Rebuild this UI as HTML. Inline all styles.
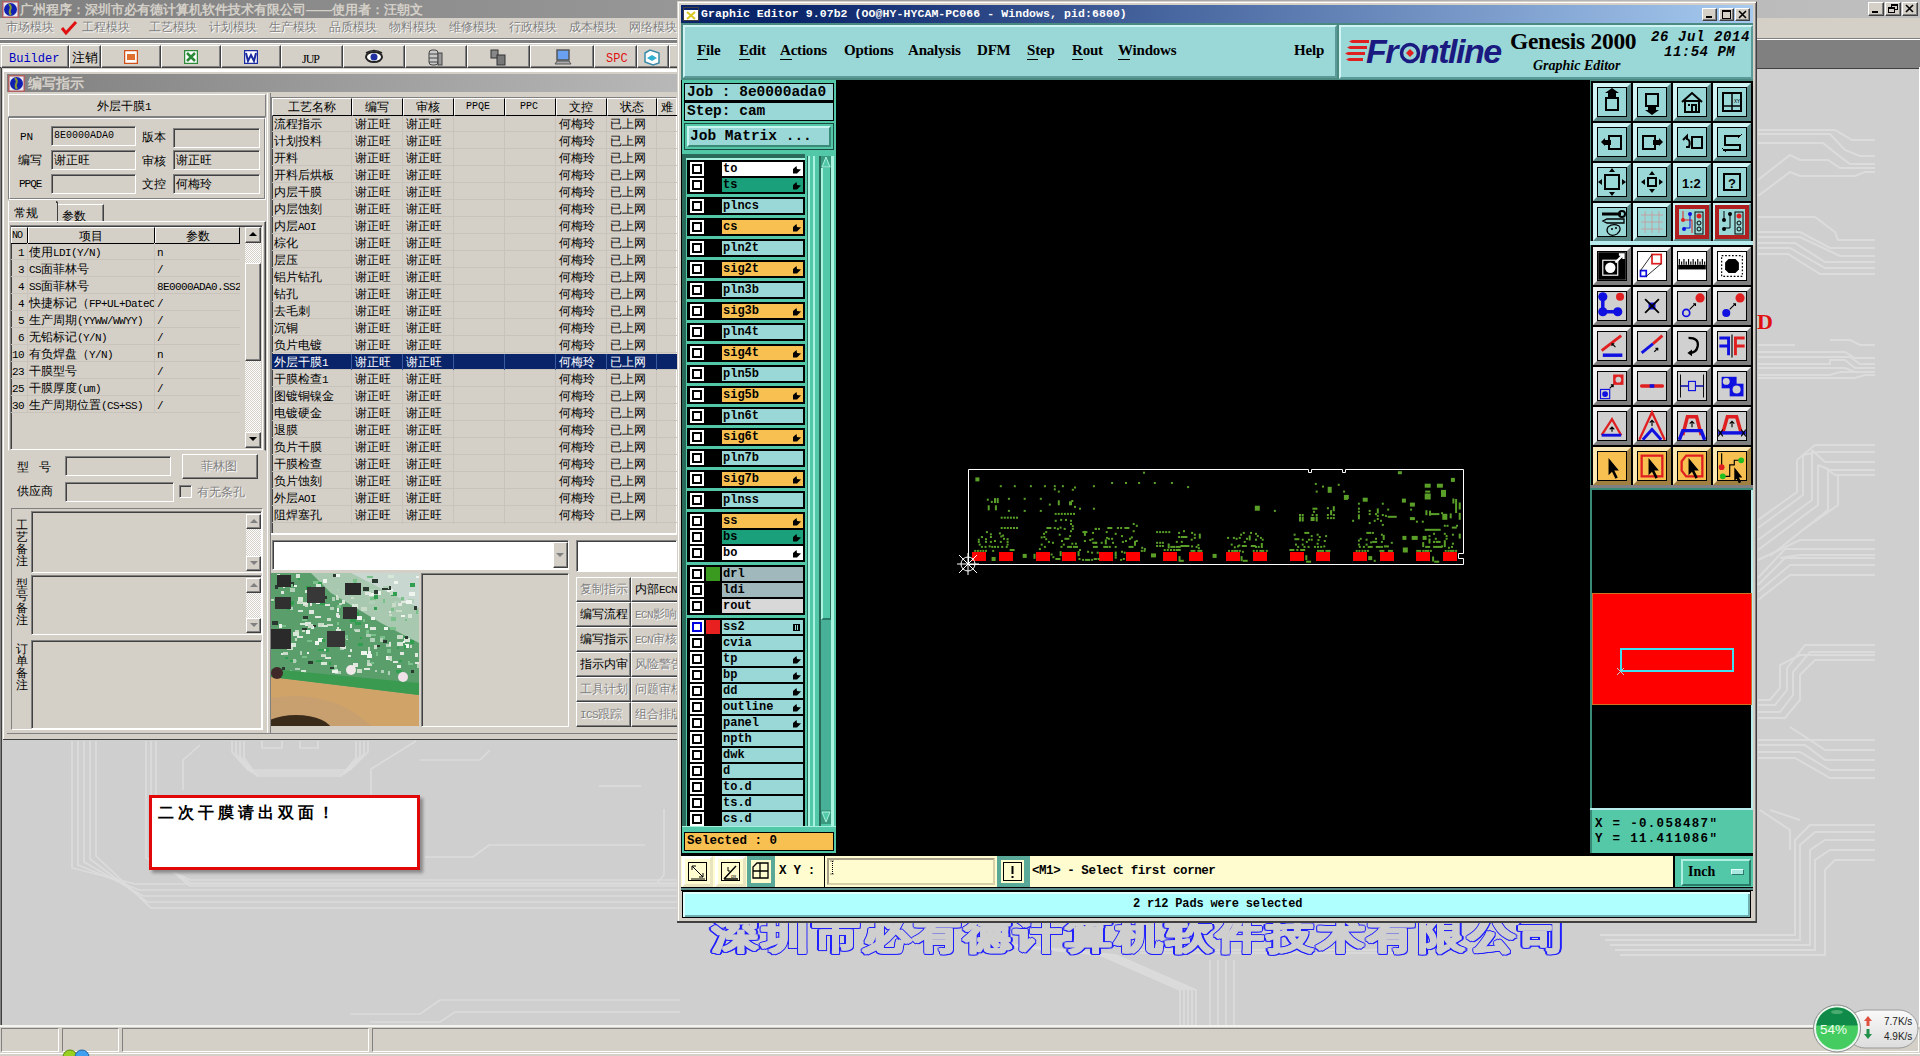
<!DOCTYPE html><html><head><meta charset="utf-8"><style>
*{margin:0;padding:0;box-sizing:border-box}
html{background:#cfcfcf}
html,body{width:1920px;height:1056px;overflow:hidden;font-family:"Liberation Sans",sans-serif;font-size:12px;color:#000}
.a{position:absolute}
.w{background:#d4d0c8}
.rz{border-top:1px solid #fff;border-left:1px solid #fff;border-right:1px solid #404040;border-bottom:1px solid #404040;box-shadow:inset -1px -1px 0 #808080}
.sk{border-top:1px solid #808080;border-left:1px solid #808080;border-right:1px solid #fff;border-bottom:1px solid #fff;box-shadow:inset 1px 1px 0 #404040}
.rb{border:1px solid;border-color:#fff #404040 #404040 #fff;box-shadow:inset -1px -1px 0 #808080}
.sf{border:1px solid;border-color:#808080 #fff #fff #808080;box-shadow:inset 1px 1px 0 #404040}
.et{border:1px solid;border-color:#808080 #fff #fff #808080}
.ee{border:1px solid;border-color:#fff #808080 #808080 #fff}
.dis{color:#808080;text-shadow:1px 1px 0 #fff}
.cn{font-family:"Liberation Sans",sans-serif;font-size:12px;line-height:12px;white-space:nowrap;font-weight:500}
.mono{font-family:"Liberation Mono",monospace}
.m{font-family:"Liberation Mono",monospace;font-size:11px;letter-spacing:-0.6px}
.ser{font-family:"Liberation Serif",serif}
</style></head><body><div class="a " style="left:0px;top:0px;width:1920px;height:18px;background:linear-gradient(90deg,#808080,#c0c0c0)"></div>
<div class="a cn" style="left:20px;top:3px;color:#d4d0c8;font-weight:bold;font-size:13px;line-height:13px">广州程序：深圳市必有德计算机软件技术有限公司——使用者：汪朝文</div>
<div class="a w" style="left:0px;top:18px;width:1920px;height:20px;"></div>
<div class="a cn" style="left:6px;top:21px;color:#808080;font-size:12px;text-shadow:1px 1px 0 #fff">市场模块</div>
<div class="a cn" style="left:82px;top:21px;color:#808080;font-size:12px;text-shadow:1px 1px 0 #fff">工程模块</div>
<div class="a cn" style="left:149px;top:21px;color:#808080;font-size:12px;text-shadow:1px 1px 0 #fff">工艺模块</div>
<div class="a cn" style="left:209px;top:21px;color:#808080;font-size:12px;text-shadow:1px 1px 0 #fff">计划模块</div>
<div class="a cn" style="left:269px;top:21px;color:#808080;font-size:12px;text-shadow:1px 1px 0 #fff">生产模块</div>
<div class="a cn" style="left:329px;top:21px;color:#808080;font-size:12px;text-shadow:1px 1px 0 #fff">品质模块</div>
<div class="a cn" style="left:389px;top:21px;color:#808080;font-size:12px;text-shadow:1px 1px 0 #fff">物料模块</div>
<div class="a cn" style="left:449px;top:21px;color:#808080;font-size:12px;text-shadow:1px 1px 0 #fff">维修模块</div>
<div class="a cn" style="left:509px;top:21px;color:#808080;font-size:12px;text-shadow:1px 1px 0 #fff">行政模块</div>
<div class="a cn" style="left:569px;top:21px;color:#808080;font-size:12px;text-shadow:1px 1px 0 #fff">成本模块</div>
<div class="a cn" style="left:629px;top:21px;color:#808080;font-size:12px;text-shadow:1px 1px 0 #fff">网络模块</div>
<svg class="a" style="left:60px;top:20px" width="18" height="16"><path d="M2 8 L6 13 L16 2" stroke="#e01010" stroke-width="3" fill="none"/></svg>
<div class="a " style="left:0px;top:38px;width:1920px;height:1px;background:#808080"></div>
<div class="a " style="left:0px;top:39px;width:1920px;height:1px;background:#fff"></div>
<div class="a " style="left:0px;top:40px;width:1920px;height:28px;background:#808080"></div>
<div class="a " style="left:0px;top:43px;width:677px;height:1px;background:#fff"></div>
<div class="a w" style="left:0px;top:44px;width:677px;height:24px;"></div>
<div class="a " style="left:0px;top:67px;width:677px;height:1px;background:#404040"></div>
<div class="a w" style="left:0px;top:68px;width:677px;height:672px;"></div>
<div class="a " style="left:0px;top:68px;width:1px;height:957px;background:#808080"></div>
<div class="a " style="left:1px;top:68px;width:1px;height:957px;background:#404040"></div>
<div class="a " style="left:3px;top:69px;width:674px;height:1px;background:#fff"></div>
<div class="a " style="left:4px;top:70px;width:673px;height:2px;background:#fff"></div>
<div class="a " style="left:7px;top:74px;width:670px;height:18px;background:linear-gradient(90deg,#808080,#b8b8b8)"></div>
<div class="a cn" style="left:28px;top:76px;color:#d4d0c8;font-weight:bold;font-size:14px;line-height:14px">编写指示</div>
<div class="a rb w" style="left:1px;top:45px;width:68px;height:23px;"></div>
<div class="a rb w" style="left:69px;top:45px;width:32px;height:23px;"></div>
<div class="a rb w" style="left:101px;top:45px;width:60px;height:23px;"></div>
<div class="a rb w" style="left:161px;top:45px;width:60px;height:23px;"></div>
<div class="a rb w" style="left:221px;top:45px;width:60px;height:23px;"></div>
<div class="a rb w" style="left:281px;top:45px;width:62px;height:23px;"></div>
<div class="a rb w" style="left:343px;top:45px;width:62px;height:23px;"></div>
<div class="a rb w" style="left:405px;top:45px;width:62px;height:23px;"></div>
<div class="a rb w" style="left:467px;top:45px;width:63px;height:23px;"></div>
<div class="a rb w" style="left:530px;top:45px;width:64px;height:23px;"></div>
<div class="a rb w" style="left:594px;top:45px;width:43px;height:23px;"></div>
<div class="a rb w" style="left:637px;top:45px;width:32px;height:23px;"></div>
<div class="a rb w" style="left:669px;top:45px;width:22px;height:23px;"></div>
<div class="a cn" style="left:9px;top:53px;font-family:Liberation Mono,monospace;font-size:12px;color:#0000c0;line-height:12px">Builder</div>
<div class="a cn" style="left:72px;top:51px;font-size:13px;line-height:13px">注销</div>
<svg class="a" style="left:124px;top:50px" width="14" height="14"><rect x="0.5" y="0.5" width="13" height="13" fill="#fff" stroke="#d0501a" stroke-width="1.5"/><rect x="3" y="4" width="8" height="6" fill="#e07030"/></svg>
<svg class="a" style="left:184px;top:50px" width="14" height="14"><rect x="0.5" y="0.5" width="13" height="13" fill="#fff" stroke="#2a8a3a" stroke-width="1.5"/><path d="M3 3 L11 11 M11 3 L3 11" stroke="#2a8a3a" stroke-width="2.5"/></svg>
<svg class="a" style="left:244px;top:50px" width="14" height="14"><rect x="0.5" y="0.5" width="13" height="13" fill="#fff" stroke="#1a2aa0" stroke-width="1.5"/><path d="M2 3 L4 11 L7 5 L10 11 L12 3" stroke="#1a2aa0" stroke-width="2" fill="none"/></svg>
<div class="a cn" style="left:302px;top:53px;font-family:Liberation Serif,serif;font-size:12px;line-height:12px;letter-spacing:-1px">JUP</div>
<svg class="a" style="left:365px;top:49px" width="18" height="16"><ellipse cx="9" cy="8" rx="8" ry="5" fill="#fff" stroke="#222" stroke-width="2"/><circle cx="9" cy="8" r="3.5" fill="#2030a0"/><path d="M1 4 Q9 -1 17 4" stroke="#222" stroke-width="1.5" fill="none"/></svg>
<svg class="a" style="left:427px;top:49px" width="16" height="17"><rect x="2" y="1" width="9" height="15" rx="3" fill="#c8c8c8" stroke="#444"/><path d="M2 5 H11 M2 9 H11 M2 13 H11" stroke="#444"/><rect x="11" y="4" width="4" height="12" fill="#999" stroke="#444"/></svg>
<svg class="a" style="left:490px;top:49px" width="16" height="17"><rect x="1" y="1" width="7" height="8" fill="#888" stroke="#333"/><rect x="7" y="6" width="8" height="10" fill="#777" stroke="#333"/></svg>
<svg class="a" style="left:554px;top:49px" width="18" height="17"><rect x="3" y="1" width="12" height="10" fill="#6aa0f0" stroke="#555" stroke-width="1.5"/><path d="M1 15 H17 L15 12 H3 Z" fill="#aaa" stroke="#555"/></svg>
<div class="a cn" style="left:606px;top:53px;font-family:Liberation Mono,monospace;font-size:12px;line-height:12px;color:#e01010">SPC</div>
<svg class="a" style="left:644px;top:49px" width="16" height="17"><path d="M1 4 L6 1 L15 4 L15 14 L9 16 L1 13 Z" fill="#fff" stroke="#3a8aa8" stroke-width="1.5"/><path d="M3 9 L8 6 L13 9 L8 12Z" fill="#30b0d0"/></svg>
<div class="a w" style="left:8px;top:94px;width:258px;height:23px;border:1px solid;border-color:#fff #808080 #808080 #fff"></div>
<div class="a cn" style="left:97px;top:100px;">外层干膜<span class=m>1</span></div>
<div class="a w" style="left:8px;top:117px;width:258px;height:83px;border:1px solid;border-color:#808080 #fff #fff #808080"></div>
<div class="a " style="left:9px;top:118px;width:256px;height:81px;border:1px solid;border-color:#fff #808080 #808080 #fff"></div>
<div class="a sf" style="left:51px;top:126px;width:85px;height:20px;background:#d4d0c8"></div>
<div class="a cn" style="left:54px;top:130px;font-family:Liberation Mono,monospace;font-size:10px;line-height:12px">8E0000ADA0</div>
<div class="a sf" style="left:51px;top:150px;width:85px;height:20px;background:#d4d0c8"></div>
<div class="a cn" style="left:54px;top:154px;">谢正旺</div>
<div class="a sf" style="left:51px;top:174px;width:85px;height:20px;background:#d4d0c8"></div>
<div class="a sf" style="left:173px;top:128px;width:87px;height:20px;background:#d4d0c8"></div>
<div class="a sf" style="left:173px;top:150px;width:87px;height:20px;background:#d4d0c8"></div>
<div class="a cn" style="left:176px;top:154px;">谢正旺</div>
<div class="a sf" style="left:173px;top:174px;width:87px;height:20px;background:#d4d0c8"></div>
<div class="a cn" style="left:176px;top:178px;">何梅玲</div>
<div class="a cn" style="left:20px;top:131px;font-family:Liberation Mono,monospace;font-size:11px;line-height:12px">PN</div>
<div class="a cn" style="left:18px;top:154px;">编写</div>
<div class="a cn" style="left:19px;top:178px;font-family:Liberation Mono,monospace;font-size:11px;line-height:12px;letter-spacing:-1px">PPQE</div>
<div class="a cn" style="left:142px;top:131px;">版本</div>
<div class="a cn" style="left:142px;top:155px;">审核</div>
<div class="a cn" style="left:142px;top:178px;">文控</div>
<div class="a " style="left:57px;top:204px;width:47px;height:18px;border:1px solid;border-color:#fff #404040 transparent #fff;box-shadow:inset -1px 0 0 #808080"></div>
<div class="a w" style="left:8px;top:201px;width:50px;height:22px;border:1px solid;border-color:#fff #404040 transparent #fff"></div>
<div class="a cn" style="left:14px;top:207px;">常规</div>
<div class="a cn" style="left:62px;top:210px;">参数</div>
<div class="a " style="left:8px;top:221px;width:258px;height:230px;border:1px solid;border-color:#fff #404040 transparent #fff;box-shadow:inset -1px 0 0 #808080"></div>
<div class="a " style="left:8px;top:201px;width:49px;height:2px;background:#d4d0c8;border-left:1px solid #fff;border-right:1px solid #404040"></div>
<div class="a sf" style="left:10px;top:225px;width:253px;height:225px;"></div>
<div class="a " style="left:11px;top:227px;width:17px;height:17px;border:1px solid;border-color:#fff #000 #000 #fff"></div>
<div class="a " style="left:28px;top:227px;width:127px;height:17px;border:1px solid;border-color:#fff #000 #000 #fff"></div>
<div class="a " style="left:155px;top:227px;width:85px;height:17px;border:1px solid;border-color:#fff #000 #000 #fff"></div>
<div class="a " style="left:11px;top:243px;width:229px;height:1px;background:#000"></div>
<div class="a cn" style="left:12px;top:230px;font-family:Liberation Mono,monospace;font-size:10px;line-height:12px;letter-spacing:-1px">NO</div>
<div class="a cn" style="left:79px;top:230px;">项目</div>
<div class="a cn" style="left:186px;top:230px;">参数</div>
<div class="a " style="left:11px;top:259px;width:229px;height:1px;background:#c8c4bc"></div>
<div class="a cn" style="left:18px;top:247px;font-family:Liberation Mono,monospace;font-size:11px;line-height:12px;letter-spacing:-0.6px">1</div>
<div class="a cn" style="left:29px;top:246px;">使用<span class=m>LDI(Y/N)</span></div>
<div class="a cn" style="left:157px;top:247px;font-family:Liberation Mono,monospace;font-size:11px;letter-spacing:-0.6px;line-height:12px;width:83px;overflow:hidden">n</div>
<div class="a " style="left:11px;top:276px;width:229px;height:1px;background:#c8c4bc"></div>
<div class="a cn" style="left:18px;top:264px;font-family:Liberation Mono,monospace;font-size:11px;line-height:12px;letter-spacing:-0.6px">3</div>
<div class="a cn" style="left:29px;top:263px;"><span class=m>CS</span>面菲林号</div>
<div class="a cn" style="left:157px;top:264px;font-family:Liberation Mono,monospace;font-size:11px;letter-spacing:-0.6px;line-height:12px;width:83px;overflow:hidden">/</div>
<div class="a " style="left:11px;top:293px;width:229px;height:1px;background:#c8c4bc"></div>
<div class="a cn" style="left:18px;top:281px;font-family:Liberation Mono,monospace;font-size:11px;line-height:12px;letter-spacing:-0.6px">4</div>
<div class="a cn" style="left:29px;top:280px;"><span class=m>SS</span>面菲林号</div>
<div class="a cn" style="left:157px;top:281px;font-family:Liberation Mono,monospace;font-size:11px;letter-spacing:-0.6px;line-height:12px;width:83px;overflow:hidden">8E0000ADA0.SS2</div>
<div class="a " style="left:11px;top:310px;width:229px;height:1px;background:#c8c4bc"></div>
<div class="a cn" style="left:18px;top:298px;font-family:Liberation Mono,monospace;font-size:11px;line-height:12px;letter-spacing:-0.6px">4</div>
<div class="a cn" style="left:29px;top:297px;">快捷标记（<span class=m>FP+UL+DateC</span></div>
<div class="a cn" style="left:157px;top:298px;font-family:Liberation Mono,monospace;font-size:11px;letter-spacing:-0.6px;line-height:12px;width:83px;overflow:hidden">/</div>
<div class="a " style="left:11px;top:327px;width:229px;height:1px;background:#c8c4bc"></div>
<div class="a cn" style="left:18px;top:315px;font-family:Liberation Mono,monospace;font-size:11px;line-height:12px;letter-spacing:-0.6px">5</div>
<div class="a cn" style="left:29px;top:314px;">生产周期<span class=m>(YYWW/WWYY)</span></div>
<div class="a cn" style="left:157px;top:315px;font-family:Liberation Mono,monospace;font-size:11px;letter-spacing:-0.6px;line-height:12px;width:83px;overflow:hidden">/</div>
<div class="a " style="left:11px;top:344px;width:229px;height:1px;background:#c8c4bc"></div>
<div class="a cn" style="left:18px;top:332px;font-family:Liberation Mono,monospace;font-size:11px;line-height:12px;letter-spacing:-0.6px">6</div>
<div class="a cn" style="left:29px;top:331px;">无铅标记<span class=m>(Y/N)</span></div>
<div class="a cn" style="left:157px;top:332px;font-family:Liberation Mono,monospace;font-size:11px;letter-spacing:-0.6px;line-height:12px;width:83px;overflow:hidden">/</div>
<div class="a " style="left:11px;top:361px;width:229px;height:1px;background:#c8c4bc"></div>
<div class="a cn" style="left:12px;top:349px;font-family:Liberation Mono,monospace;font-size:11px;line-height:12px;letter-spacing:-0.6px">10</div>
<div class="a cn" style="left:29px;top:348px;">有负焊盘（<span class=m>Y/N)</span></div>
<div class="a cn" style="left:157px;top:349px;font-family:Liberation Mono,monospace;font-size:11px;letter-spacing:-0.6px;line-height:12px;width:83px;overflow:hidden">n</div>
<div class="a " style="left:11px;top:378px;width:229px;height:1px;background:#c8c4bc"></div>
<div class="a cn" style="left:12px;top:366px;font-family:Liberation Mono,monospace;font-size:11px;line-height:12px;letter-spacing:-0.6px">23</div>
<div class="a cn" style="left:29px;top:365px;">干膜型号</div>
<div class="a cn" style="left:157px;top:366px;font-family:Liberation Mono,monospace;font-size:11px;letter-spacing:-0.6px;line-height:12px;width:83px;overflow:hidden">/</div>
<div class="a " style="left:11px;top:395px;width:229px;height:1px;background:#c8c4bc"></div>
<div class="a cn" style="left:12px;top:383px;font-family:Liberation Mono,monospace;font-size:11px;line-height:12px;letter-spacing:-0.6px">25</div>
<div class="a cn" style="left:29px;top:382px;">干膜厚度<span class=m>(um)</span></div>
<div class="a cn" style="left:157px;top:383px;font-family:Liberation Mono,monospace;font-size:11px;letter-spacing:-0.6px;line-height:12px;width:83px;overflow:hidden">/</div>
<div class="a " style="left:11px;top:412px;width:229px;height:1px;background:#c8c4bc"></div>
<div class="a cn" style="left:12px;top:400px;font-family:Liberation Mono,monospace;font-size:11px;line-height:12px;letter-spacing:-0.6px">30</div>
<div class="a cn" style="left:29px;top:399px;">生产周期位置<span class=m>(CS+SS)</span></div>
<div class="a cn" style="left:157px;top:400px;font-family:Liberation Mono,monospace;font-size:11px;letter-spacing:-0.6px;line-height:12px;width:83px;overflow:hidden">/</div>
<div class="a " style="left:27px;top:243px;width:1px;height:170px;background:#c8c4bc"></div>
<div class="a " style="left:154px;top:243px;width:1px;height:170px;background:#c8c4bc"></div>
<div class="a " style="left:245px;top:227px;width:16px;height:221px;background-image:repeating-conic-gradient(#fff 0 25%,#d4d0c8 0 50%);background-size:2px 2px"></div>
<div class="a rb w" style="left:245px;top:227px;width:16px;height:16px;"></div>
<svg class="a" style="left:249px;top:232px" width="8" height="5"><path d="M0 4 L4 0 L8 4Z" fill="#000"/></svg>
<div class="a rb w" style="left:245px;top:263px;width:16px;height:98px;"></div>
<div class="a rb w" style="left:245px;top:432px;width:16px;height:16px;"></div>
<svg class="a" style="left:249px;top:437px" width="8" height="5"><path d="M0 0 L4 4 L8 0Z" fill="#000"/></svg>
<div class="a cn" style="left:17px;top:461px;">型&nbsp;&nbsp;&nbsp;号</div>
<div class="a cn" style="left:17px;top:485px;">供应商</div>
<div class="a sf" style="left:65px;top:456px;width:106px;height:20px;background:#d4d0c8"></div>
<div class="a sf" style="left:65px;top:482px;width:109px;height:20px;background:#d4d0c8"></div>
<div class="a rb w" style="left:182px;top:454px;width:76px;height:25px;"></div>
<div class="a cn dis" style="left:201px;top:460px;">菲林图</div>
<div class="a sf" style="left:179px;top:485px;width:13px;height:13px;"></div>
<div class="a cn dis" style="left:197px;top:486px;">有无条孔</div>
<div class="a " style="left:11px;top:508px;width:252px;height:222px;border:1px solid;border-color:#808080 #fff #fff #808080"></div>
<div class="a sf" style="left:31px;top:511px;width:231px;height:62px;"></div>
<div class="a cn" style="left:16px;top:519px;line-height:12px">工<br>艺<br>备<br>注</div>
<div class="a sf" style="left:31px;top:575px;width:231px;height:60px;"></div>
<div class="a cn" style="left:16px;top:578px;line-height:12px">型<br>号<br>备<br>注</div>
<div class="a sf" style="left:31px;top:640px;width:231px;height:89px;"></div>
<div class="a cn" style="left:16px;top:643px;line-height:12px">订<br>单<br>备<br>注</div>
<div class="a " style="left:246px;top:514px;width:15px;height:57px;background-image:repeating-conic-gradient(#fff 0 25%,#d4d0c8 0 50%);background-size:2px 2px"></div>
<div class="a rb w" style="left:246px;top:514px;width:15px;height:15px;"></div>
<div class="a rb w" style="left:246px;top:556px;width:15px;height:15px;"></div>
<svg class="a" style="left:250px;top:519px" width="8" height="5"><path d="M0 4 L4 0 L8 4Z" fill="#808080"/></svg>
<svg class="a" style="left:250px;top:561px" width="8" height="5"><path d="M0 0 L4 4 L8 0Z" fill="#808080"/></svg>
<div class="a " style="left:246px;top:578px;width:15px;height:55px;background-image:repeating-conic-gradient(#fff 0 25%,#d4d0c8 0 50%);background-size:2px 2px"></div>
<div class="a rb w" style="left:246px;top:578px;width:15px;height:15px;"></div>
<div class="a rb w" style="left:246px;top:618px;width:15px;height:15px;"></div>
<svg class="a" style="left:250px;top:583px" width="8" height="5"><path d="M0 4 L4 0 L8 4Z" fill="#808080"/></svg>
<svg class="a" style="left:250px;top:623px" width="8" height="5"><path d="M0 0 L4 4 L8 0Z" fill="#808080"/></svg>
<div class="a " style="left:267px;top:93px;width:1px;height:640px;background:#fff"></div>
<div class="a " style="left:270px;top:93px;width:1px;height:640px;background:#808080"></div>
<div class="a sf" style="left:271px;top:97px;width:406px;height:437px;"></div>
<div class="a " style="left:272px;top:98px;width:80px;height:18px;border:1px solid;border-color:#fff #000 #000 #fff"></div>
<div class="a cn" style="left:288px;top:101px;">工艺名称</div>
<div class="a " style="left:352px;top:98px;width:51px;height:18px;border:1px solid;border-color:#fff #000 #000 #fff"></div>
<div class="a cn" style="left:365px;top:101px;">编写</div>
<div class="a " style="left:403px;top:98px;width:51px;height:18px;border:1px solid;border-color:#fff #000 #000 #fff"></div>
<div class="a cn" style="left:416px;top:101px;">审核</div>
<div class="a " style="left:454px;top:98px;width:51px;height:18px;border:1px solid;border-color:#fff #000 #000 #fff"></div>
<div class="a cn" style="left:466px;top:101px;font-family:Liberation Mono,monospace;font-size:10px;line-height:12px">PPQE</div>
<div class="a " style="left:505px;top:98px;width:51px;height:18px;border:1px solid;border-color:#fff #000 #000 #fff"></div>
<div class="a cn" style="left:520px;top:101px;font-family:Liberation Mono,monospace;font-size:10px;line-height:12px">PPC</div>
<div class="a " style="left:556px;top:98px;width:51px;height:18px;border:1px solid;border-color:#fff #000 #000 #fff"></div>
<div class="a cn" style="left:569px;top:101px;">文控</div>
<div class="a " style="left:607px;top:98px;width:50px;height:18px;border:1px solid;border-color:#fff #000 #000 #fff"></div>
<div class="a cn" style="left:620px;top:101px;">状态</div>
<div class="a " style="left:657px;top:98px;width:33px;height:18px;border:1px solid;border-color:#fff #000 #000 #fff"></div>
<div class="a cn" style="left:661px;top:101px;">难</div>
<div class="a " style="left:272px;top:131px;width:405px;height:1px;background:#c8c4bc"></div>
<div class="a cn" style="left:274px;top:118px;">流程指示</div>
<div class="a cn" style="left:355px;top:118px;">谢正旺</div>
<div class="a cn" style="left:406px;top:118px;">谢正旺</div>
<div class="a cn" style="left:559px;top:118px;">何梅玲</div>
<div class="a cn" style="left:610px;top:118px;">已上网</div>
<div class="a " style="left:272px;top:148px;width:405px;height:1px;background:#c8c4bc"></div>
<div class="a cn" style="left:274px;top:135px;">计划投料</div>
<div class="a cn" style="left:355px;top:135px;">谢正旺</div>
<div class="a cn" style="left:406px;top:135px;">谢正旺</div>
<div class="a cn" style="left:559px;top:135px;">何梅玲</div>
<div class="a cn" style="left:610px;top:135px;">已上网</div>
<div class="a " style="left:272px;top:165px;width:405px;height:1px;background:#c8c4bc"></div>
<div class="a cn" style="left:274px;top:152px;">开料</div>
<div class="a cn" style="left:355px;top:152px;">谢正旺</div>
<div class="a cn" style="left:406px;top:152px;">谢正旺</div>
<div class="a cn" style="left:559px;top:152px;">何梅玲</div>
<div class="a cn" style="left:610px;top:152px;">已上网</div>
<div class="a " style="left:272px;top:182px;width:405px;height:1px;background:#c8c4bc"></div>
<div class="a cn" style="left:274px;top:169px;">开料后烘板</div>
<div class="a cn" style="left:355px;top:169px;">谢正旺</div>
<div class="a cn" style="left:406px;top:169px;">谢正旺</div>
<div class="a cn" style="left:559px;top:169px;">何梅玲</div>
<div class="a cn" style="left:610px;top:169px;">已上网</div>
<div class="a " style="left:272px;top:199px;width:405px;height:1px;background:#c8c4bc"></div>
<div class="a cn" style="left:274px;top:186px;">内层干膜</div>
<div class="a cn" style="left:355px;top:186px;">谢正旺</div>
<div class="a cn" style="left:406px;top:186px;">谢正旺</div>
<div class="a cn" style="left:559px;top:186px;">何梅玲</div>
<div class="a cn" style="left:610px;top:186px;">已上网</div>
<div class="a " style="left:272px;top:216px;width:405px;height:1px;background:#c8c4bc"></div>
<div class="a cn" style="left:274px;top:203px;">内层蚀刻</div>
<div class="a cn" style="left:355px;top:203px;">谢正旺</div>
<div class="a cn" style="left:406px;top:203px;">谢正旺</div>
<div class="a cn" style="left:559px;top:203px;">何梅玲</div>
<div class="a cn" style="left:610px;top:203px;">已上网</div>
<div class="a " style="left:272px;top:233px;width:405px;height:1px;background:#c8c4bc"></div>
<div class="a cn" style="left:274px;top:220px;">内层<span class=m>AOI</span></div>
<div class="a cn" style="left:355px;top:220px;">谢正旺</div>
<div class="a cn" style="left:406px;top:220px;">谢正旺</div>
<div class="a cn" style="left:559px;top:220px;">何梅玲</div>
<div class="a cn" style="left:610px;top:220px;">已上网</div>
<div class="a " style="left:272px;top:250px;width:405px;height:1px;background:#c8c4bc"></div>
<div class="a cn" style="left:274px;top:237px;">棕化</div>
<div class="a cn" style="left:355px;top:237px;">谢正旺</div>
<div class="a cn" style="left:406px;top:237px;">谢正旺</div>
<div class="a cn" style="left:559px;top:237px;">何梅玲</div>
<div class="a cn" style="left:610px;top:237px;">已上网</div>
<div class="a " style="left:272px;top:267px;width:405px;height:1px;background:#c8c4bc"></div>
<div class="a cn" style="left:274px;top:254px;">层压</div>
<div class="a cn" style="left:355px;top:254px;">谢正旺</div>
<div class="a cn" style="left:406px;top:254px;">谢正旺</div>
<div class="a cn" style="left:559px;top:254px;">何梅玲</div>
<div class="a cn" style="left:610px;top:254px;">已上网</div>
<div class="a " style="left:272px;top:284px;width:405px;height:1px;background:#c8c4bc"></div>
<div class="a cn" style="left:274px;top:271px;">铝片钻孔</div>
<div class="a cn" style="left:355px;top:271px;">谢正旺</div>
<div class="a cn" style="left:406px;top:271px;">谢正旺</div>
<div class="a cn" style="left:559px;top:271px;">何梅玲</div>
<div class="a cn" style="left:610px;top:271px;">已上网</div>
<div class="a " style="left:272px;top:301px;width:405px;height:1px;background:#c8c4bc"></div>
<div class="a cn" style="left:274px;top:288px;">钻孔</div>
<div class="a cn" style="left:355px;top:288px;">谢正旺</div>
<div class="a cn" style="left:406px;top:288px;">谢正旺</div>
<div class="a cn" style="left:559px;top:288px;">何梅玲</div>
<div class="a cn" style="left:610px;top:288px;">已上网</div>
<div class="a " style="left:272px;top:318px;width:405px;height:1px;background:#c8c4bc"></div>
<div class="a cn" style="left:274px;top:305px;">去毛刺</div>
<div class="a cn" style="left:355px;top:305px;">谢正旺</div>
<div class="a cn" style="left:406px;top:305px;">谢正旺</div>
<div class="a cn" style="left:559px;top:305px;">何梅玲</div>
<div class="a cn" style="left:610px;top:305px;">已上网</div>
<div class="a " style="left:272px;top:335px;width:405px;height:1px;background:#c8c4bc"></div>
<div class="a cn" style="left:274px;top:322px;">沉铜</div>
<div class="a cn" style="left:355px;top:322px;">谢正旺</div>
<div class="a cn" style="left:406px;top:322px;">谢正旺</div>
<div class="a cn" style="left:559px;top:322px;">何梅玲</div>
<div class="a cn" style="left:610px;top:322px;">已上网</div>
<div class="a " style="left:272px;top:352px;width:405px;height:1px;background:#c8c4bc"></div>
<div class="a cn" style="left:274px;top:339px;">负片电镀</div>
<div class="a cn" style="left:355px;top:339px;">谢正旺</div>
<div class="a cn" style="left:406px;top:339px;">谢正旺</div>
<div class="a cn" style="left:559px;top:339px;">何梅玲</div>
<div class="a cn" style="left:610px;top:339px;">已上网</div>
<div class="a " style="left:272px;top:354px;width:405px;height:16px;background:#0a246a"></div>
<div class="a " style="left:272px;top:369px;width:405px;height:1px;background:#c8c4bc"></div>
<div class="a cn" style="left:274px;top:356px;color:#fff;">外层干膜<span class=m>1</span></div>
<div class="a cn" style="left:355px;top:356px;color:#fff;">谢正旺</div>
<div class="a cn" style="left:406px;top:356px;color:#fff;">谢正旺</div>
<div class="a cn" style="left:559px;top:356px;color:#fff;">何梅玲</div>
<div class="a cn" style="left:610px;top:356px;color:#fff;">已上网</div>
<div class="a " style="left:272px;top:386px;width:405px;height:1px;background:#c8c4bc"></div>
<div class="a cn" style="left:274px;top:373px;">干膜检查<span class=m>1</span></div>
<div class="a cn" style="left:355px;top:373px;">谢正旺</div>
<div class="a cn" style="left:406px;top:373px;">谢正旺</div>
<div class="a cn" style="left:559px;top:373px;">何梅玲</div>
<div class="a cn" style="left:610px;top:373px;">已上网</div>
<div class="a " style="left:272px;top:403px;width:405px;height:1px;background:#c8c4bc"></div>
<div class="a cn" style="left:274px;top:390px;">图镀铜镍金</div>
<div class="a cn" style="left:355px;top:390px;">谢正旺</div>
<div class="a cn" style="left:406px;top:390px;">谢正旺</div>
<div class="a cn" style="left:559px;top:390px;">何梅玲</div>
<div class="a cn" style="left:610px;top:390px;">已上网</div>
<div class="a " style="left:272px;top:420px;width:405px;height:1px;background:#c8c4bc"></div>
<div class="a cn" style="left:274px;top:407px;">电镀硬金</div>
<div class="a cn" style="left:355px;top:407px;">谢正旺</div>
<div class="a cn" style="left:406px;top:407px;">谢正旺</div>
<div class="a cn" style="left:559px;top:407px;">何梅玲</div>
<div class="a cn" style="left:610px;top:407px;">已上网</div>
<div class="a " style="left:272px;top:437px;width:405px;height:1px;background:#c8c4bc"></div>
<div class="a cn" style="left:274px;top:424px;">退膜</div>
<div class="a cn" style="left:355px;top:424px;">谢正旺</div>
<div class="a cn" style="left:406px;top:424px;">谢正旺</div>
<div class="a cn" style="left:559px;top:424px;">何梅玲</div>
<div class="a cn" style="left:610px;top:424px;">已上网</div>
<div class="a " style="left:272px;top:454px;width:405px;height:1px;background:#c8c4bc"></div>
<div class="a cn" style="left:274px;top:441px;">负片干膜</div>
<div class="a cn" style="left:355px;top:441px;">谢正旺</div>
<div class="a cn" style="left:406px;top:441px;">谢正旺</div>
<div class="a cn" style="left:559px;top:441px;">何梅玲</div>
<div class="a cn" style="left:610px;top:441px;">已上网</div>
<div class="a " style="left:272px;top:471px;width:405px;height:1px;background:#c8c4bc"></div>
<div class="a cn" style="left:274px;top:458px;">干膜检查</div>
<div class="a cn" style="left:355px;top:458px;">谢正旺</div>
<div class="a cn" style="left:406px;top:458px;">谢正旺</div>
<div class="a cn" style="left:559px;top:458px;">何梅玲</div>
<div class="a cn" style="left:610px;top:458px;">已上网</div>
<div class="a " style="left:272px;top:488px;width:405px;height:1px;background:#c8c4bc"></div>
<div class="a cn" style="left:274px;top:475px;">负片蚀刻</div>
<div class="a cn" style="left:355px;top:475px;">谢正旺</div>
<div class="a cn" style="left:406px;top:475px;">谢正旺</div>
<div class="a cn" style="left:559px;top:475px;">何梅玲</div>
<div class="a cn" style="left:610px;top:475px;">已上网</div>
<div class="a " style="left:272px;top:505px;width:405px;height:1px;background:#c8c4bc"></div>
<div class="a cn" style="left:274px;top:492px;">外层<span class=m>AOI</span></div>
<div class="a cn" style="left:355px;top:492px;">谢正旺</div>
<div class="a cn" style="left:406px;top:492px;">谢正旺</div>
<div class="a cn" style="left:559px;top:492px;">何梅玲</div>
<div class="a cn" style="left:610px;top:492px;">已上网</div>
<div class="a " style="left:272px;top:522px;width:405px;height:1px;background:#c8c4bc"></div>
<div class="a cn" style="left:274px;top:509px;">阻焊塞孔</div>
<div class="a cn" style="left:355px;top:509px;">谢正旺</div>
<div class="a cn" style="left:406px;top:509px;">谢正旺</div>
<div class="a cn" style="left:559px;top:509px;">何梅玲</div>
<div class="a cn" style="left:610px;top:509px;">已上网</div>
<div class="a " style="left:351px;top:116px;width:1px;height:408px;background:#c8c4bc"></div>
<div class="a " style="left:402px;top:116px;width:1px;height:408px;background:#c8c4bc"></div>
<div class="a " style="left:453px;top:116px;width:1px;height:408px;background:#c8c4bc"></div>
<div class="a " style="left:504px;top:116px;width:1px;height:408px;background:#c8c4bc"></div>
<div class="a " style="left:555px;top:116px;width:1px;height:408px;background:#c8c4bc"></div>
<div class="a " style="left:606px;top:116px;width:1px;height:408px;background:#c8c4bc"></div>
<div class="a " style="left:656px;top:116px;width:1px;height:408px;background:#c8c4bc"></div>
<div class="a " style="left:351px;top:354px;width:1px;height:16px;background:#3a5aa0"></div>
<div class="a " style="left:402px;top:354px;width:1px;height:16px;background:#3a5aa0"></div>
<div class="a " style="left:453px;top:354px;width:1px;height:16px;background:#3a5aa0"></div>
<div class="a " style="left:504px;top:354px;width:1px;height:16px;background:#3a5aa0"></div>
<div class="a " style="left:555px;top:354px;width:1px;height:16px;background:#3a5aa0"></div>
<div class="a " style="left:606px;top:354px;width:1px;height:16px;background:#3a5aa0"></div>
<div class="a " style="left:656px;top:354px;width:1px;height:16px;background:#3a5aa0"></div>
<div class="a " style="left:271px;top:533px;width:406px;height:2px;background:#fff"></div>
<div class="a sf" style="left:272px;top:540px;width:297px;height:30px;background:#fff"></div>
<div class="a rb w" style="left:553px;top:542px;width:15px;height:26px;"></div>
<svg class="a" style="left:556px;top:553px" width="8" height="5"><path d="M0 0 L4 4 L8 0Z" fill="#808080"/></svg>
<div class="a sf" style="left:576px;top:540px;width:101px;height:32px;background:#fff"></div>
<div class="a" style="left:271px;top:573px;width:148px;height:153px;overflow:hidden"><svg style="filter:blur(0.7px)" width="148" height="153">
<rect width="148" height="153" fill="#5a9e6c"/>
<path d="M40 0 H148 V70 L110 50 L60 20Z" fill="#a8c8b0"/>
<path d="M80 0 H148 V35 L115 18Z" fill="#c8d8d0"/>
<rect x="115" y="71" width="5" height="3" fill="#b0d0b8"/><rect x="47" y="65" width="5" height="4" fill="#eef4ee"/><rect x="24" y="57" width="4" height="2" fill="#c8dcc8"/><rect x="137" y="88" width="2" height="4" fill="#7ac08a"/><rect x="115" y="83" width="6" height="4" fill="#eef4ee"/><rect x="3" y="67" width="2" height="2" fill="#d8e8d8"/><rect x="48" y="30" width="6" height="2" fill="#30a050"/><rect x="83" y="56" width="6" height="2" fill="#b0d0b8"/><rect x="75" y="63" width="2" height="4" fill="#c8dcc8"/><rect x="117" y="83" width="4" height="3" fill="#c8dcc8"/><rect x="65" y="40" width="3" height="4" fill="#e0e8e0"/><rect x="7" y="8" width="6" height="2" fill="#7ac08a"/><rect x="27" y="37" width="5" height="2" fill="#d8e8d8"/><rect x="0" y="27" width="3" height="2" fill="#30a050"/><rect x="96" y="90" width="5" height="3" fill="#c8dcc8"/><rect x="144" y="80" width="3" height="4" fill="#e0e8e0"/><rect x="86" y="11" width="4" height="3" fill="#d8e8d8"/><rect x="104" y="97" width="2" height="2" fill="#b0d0b8"/><rect x="25" y="1" width="2" height="3" fill="#30a050"/><rect x="45" y="87" width="6" height="2" fill="#30a050"/><rect x="130" y="24" width="3" height="3" fill="#7ac08a"/><rect x="29" y="50" width="5" height="2" fill="#d8e8d8"/><rect x="69" y="75" width="4" height="2" fill="#b0d0b8"/><rect x="47" y="50" width="6" height="4" fill="#c8dcc8"/><rect x="10" y="18" width="3" height="3" fill="#e0e8e0"/><rect x="2" y="98" width="6" height="3" fill="#e0e8e0"/><rect x="98" y="9" width="2" height="2" fill="#b0d0b8"/><rect x="62" y="1" width="6" height="3" fill="#2a3a30"/><rect x="116" y="16" width="6" height="3" fill="#eef4ee"/><rect x="98" y="23" width="3" height="3" fill="#b0d0b8"/><rect x="63" y="92" width="3" height="2" fill="#b0d0b8"/><rect x="99" y="61" width="6" height="2" fill="#7ac08a"/><rect x="12" y="13" width="2" height="2" fill="#e0e8e0"/><rect x="61" y="94" width="5" height="3" fill="#7ac08a"/><rect x="125" y="37" width="6" height="2" fill="#c8dcc8"/><rect x="32" y="29" width="5" height="4" fill="#c8dcc8"/><rect x="71" y="27" width="3" height="4" fill="#d8e8d8"/><rect x="17" y="34" width="5" height="3" fill="#b0d0b8"/><rect x="15" y="5" width="3" height="3" fill="#2a3a30"/><rect x="135" y="73" width="3" height="2" fill="#2a3a30"/><rect x="35" y="57" width="4" height="4" fill="#eef4ee"/><rect x="8" y="2" width="5" height="3" fill="#e0e8e0"/><rect x="8" y="2" width="6" height="4" fill="#c8dcc8"/><rect x="123" y="8" width="4" height="3" fill="#eef4ee"/><rect x="18" y="9" width="5" height="4" fill="#2a3a30"/><rect x="11" y="94" width="3" height="3" fill="#2a3a30"/><rect x="21" y="87" width="5" height="2" fill="#7ac08a"/><rect x="7" y="63" width="6" height="2" fill="#7ac08a"/><rect x="97" y="74" width="2" height="4" fill="#c8dcc8"/><rect x="20" y="11" width="2" height="3" fill="#7ac08a"/><rect x="84" y="49" width="6" height="3" fill="#30a050"/><rect x="118" y="69" width="2" height="4" fill="#d8e8d8"/><rect x="79" y="76" width="2" height="3" fill="#d8e8d8"/><rect x="58" y="89" width="2" height="3" fill="#30a050"/><rect x="65" y="1" width="4" height="3" fill="#eef4ee"/><rect x="51" y="66" width="3" height="3" fill="#30a050"/><rect x="127" y="30" width="4" height="3" fill="#e0e8e0"/><rect x="50" y="81" width="5" height="2" fill="#b0d0b8"/><rect x="98" y="28" width="6" height="3" fill="#b0d0b8"/><rect x="34" y="17" width="5" height="3" fill="#d8e8d8"/><rect x="16" y="35" width="3" height="2" fill="#30a050"/><rect x="120" y="35" width="3" height="3" fill="#7ac08a"/><rect x="133" y="63" width="4" height="4" fill="#30a050"/><rect x="82" y="9" width="2" height="3" fill="#d8e8d8"/><rect x="71" y="73" width="4" height="3" fill="#d8e8d8"/><rect x="34" y="51" width="5" height="2" fill="#d8e8d8"/><rect x="68" y="30" width="3" height="2" fill="#c8dcc8"/><rect x="114" y="13" width="6" height="4" fill="#2a3a30"/><rect x="19" y="87" width="3" height="2" fill="#30a050"/><rect x="65" y="22" width="2" height="3" fill="#d8e8d8"/><rect x="45" y="28" width="4" height="3" fill="#eef4ee"/><rect x="100" y="89" width="3" height="2" fill="#7ac08a"/><rect x="99" y="16" width="5" height="3" fill="#b0d0b8"/><rect x="1" y="48" width="6" height="4" fill="#2a3a30"/><rect x="118" y="41" width="3" height="2" fill="#c8dcc8"/><rect x="54" y="31" width="5" height="2" fill="#e0e8e0"/><rect x="137" y="41" width="4" height="4" fill="#d8e8d8"/><rect x="89" y="64" width="2" height="2" fill="#30a050"/><rect x="87" y="70" width="5" height="3" fill="#30a050"/><rect x="7" y="27" width="2" height="3" fill="#d8e8d8"/><rect x="44" y="68" width="4" height="4" fill="#eef4ee"/><rect x="120" y="19" width="6" height="4" fill="#30a050"/><rect x="126" y="74" width="2" height="2" fill="#30a050"/><rect x="134" y="71" width="4" height="4" fill="#eef4ee"/><rect x="133" y="65" width="6" height="3" fill="#e0e8e0"/><rect x="97" y="78" width="3" height="3" fill="#eef4ee"/><rect x="139" y="67" width="4" height="4" fill="#30a050"/><rect x="51" y="52" width="6" height="2" fill="#d8e8d8"/><rect x="96" y="3" width="6" height="2" fill="#7ac08a"/><rect x="139" y="72" width="2" height="3" fill="#c8dcc8"/><rect x="42" y="8" width="6" height="3" fill="#7ac08a"/><rect x="103" y="34" width="3" height="3" fill="#30a050"/><rect x="32" y="43" width="5" height="3" fill="#2a3a30"/><rect x="27" y="24" width="5" height="4" fill="#d8e8d8"/><rect x="66" y="16" width="2" height="2" fill="#b0d0b8"/><rect x="39" y="29" width="2" height="4" fill="#e0e8e0"/><rect x="82" y="92" width="4" height="2" fill="#30a050"/><rect x="26" y="63" width="6" height="2" fill="#e0e8e0"/><rect x="50" y="89" width="6" height="3" fill="#d8e8d8"/><rect x="96" y="81" width="5" height="4" fill="#eef4ee"/><rect x="137" y="26" width="6" height="4" fill="#b0d0b8"/><rect x="135" y="27" width="6" height="4" fill="#eef4ee"/><rect x="59" y="94" width="4" height="2" fill="#2a3a30"/><rect x="80" y="24" width="3" height="2" fill="#c8dcc8"/><rect x="34" y="30" width="3" height="4" fill="#c8dcc8"/><rect x="66" y="49" width="2" height="3" fill="#7ac08a"/><rect x="139" y="90" width="3" height="2" fill="#7ac08a"/><rect x="4" y="12" width="3" height="4" fill="#2a3a30"/><rect x="92" y="14" width="6" height="4" fill="#2a3a30"/><rect x="128" y="87" width="3" height="2" fill="#30a050"/><rect x="27" y="3" width="2" height="4" fill="#30a050"/><rect x="37" y="24" width="3" height="2" fill="#b0d0b8"/><rect x="44" y="20" width="4" height="4" fill="#c8dcc8"/><rect x="148" y="7" width="3" height="4" fill="#30a050"/><rect x="19" y="97" width="2" height="3" fill="#7ac08a"/><rect x="119" y="54" width="6" height="3" fill="#7ac08a"/><rect x="53" y="76" width="4" height="2" fill="#d8e8d8"/><rect x="51" y="23" width="5" height="3" fill="#2a3a30"/><rect x="94" y="51" width="3" height="4" fill="#eef4ee"/><rect x="24" y="65" width="2" height="3" fill="#c8dcc8"/><rect x="103" y="72" width="6" height="2" fill="#2a3a30"/><rect x="66" y="35" width="2" height="4" fill="#eef4ee"/><rect x="103" y="17" width="4" height="4" fill="#2a3a30"/><rect x="110" y="97" width="3" height="3" fill="#b0d0b8"/><rect x="47" y="9" width="4" height="3" fill="#30a050"/><rect x="25" y="1" width="4" height="4" fill="#d8e8d8"/><rect x="59" y="34" width="4" height="3" fill="#b0d0b8"/><rect x="103" y="72" width="3" height="4" fill="#c8dcc8"/><rect x="99" y="65" width="5" height="4" fill="#b0d0b8"/><rect x="30" y="97" width="5" height="4" fill="#d8e8d8"/><rect x="29" y="78" width="2" height="4" fill="#b0d0b8"/><rect x="65" y="56" width="5" height="4" fill="#d8e8d8"/><rect x="50" y="82" width="5" height="2" fill="#c8dcc8"/><rect x="66" y="32" width="4" height="3" fill="#7ac08a"/><rect x="133" y="72" width="2" height="4" fill="#30a050"/><rect x="19" y="70" width="6" height="4" fill="#d8e8d8"/><rect x="98" y="20" width="5" height="3" fill="#eef4ee"/><rect x="126" y="69" width="6" height="4" fill="#d8e8d8"/><rect x="109" y="63" width="5" height="3" fill="#7ac08a"/><rect x="79" y="46" width="6" height="3" fill="#30a050"/><rect x="69" y="71" width="4" height="4" fill="#e0e8e0"/><rect x="6" y="1" width="3" height="4" fill="#d8e8d8"/><rect x="40" y="52" width="5" height="2" fill="#2a3a30"/><rect x="101" y="6" width="6" height="4" fill="#2a3a30"/><rect x="18" y="28" width="5" height="4" fill="#30a050"/><rect x="64" y="96" width="3" height="2" fill="#c8dcc8"/><rect x="119" y="18" width="3" height="4" fill="#c8dcc8"/><rect x="12" y="79" width="5" height="3" fill="#c8dcc8"/><rect x="52" y="6" width="4" height="4" fill="#eef4ee"/><rect x="31" y="46" width="5" height="2" fill="#7ac08a"/><rect x="116" y="76" width="4" height="4" fill="#7ac08a"/><rect x="93" y="95" width="6" height="2" fill="#e0e8e0"/><rect x="32" y="30" width="5" height="2" fill="#e0e8e0"/><rect x="129" y="79" width="4" height="3" fill="#e0e8e0"/><rect x="144" y="89" width="6" height="2" fill="#e0e8e0"/><rect x="61" y="24" width="3" height="4" fill="#b0d0b8"/><rect x="10" y="80" width="2" height="2" fill="#e0e8e0"/><rect x="66" y="54" width="2" height="4" fill="#d8e8d8"/><rect x="26" y="28" width="6" height="3" fill="#c8dcc8"/><rect x="22" y="86" width="3" height="4" fill="#b0d0b8"/><rect x="95" y="61" width="5" height="3" fill="#b0d0b8"/><rect x="86" y="43" width="5" height="4" fill="#eef4ee"/><rect x="19" y="15" width="5" height="4" fill="#b0d0b8"/><rect x="113" y="54" width="4" height="3" fill="#eef4ee"/><rect x="94" y="19" width="6" height="3" fill="#e0e8e0"/><rect x="140" y="97" width="3" height="3" fill="#2a3a30"/><rect x="148" y="12" width="5" height="3" fill="#c8dcc8"/><rect x="139" y="10" width="5" height="4" fill="#30a050"/><rect x="118" y="38" width="2" height="2" fill="#e0e8e0"/><rect x="54" y="84" width="6" height="2" fill="#e0e8e0"/><rect x="126" y="92" width="4" height="3" fill="#eef4ee"/><rect x="56" y="45" width="4" height="3" fill="#c8dcc8"/><rect x="82" y="90" width="5" height="4" fill="#e0e8e0"/><rect x="112" y="67" width="4" height="3" fill="#2a3a30"/><rect x="56" y="51" width="6" height="2" fill="#c8dcc8"/><rect x="92" y="46" width="2" height="3" fill="#7ac08a"/><rect x="99" y="24" width="6" height="3" fill="#7ac08a"/><rect x="138" y="19" width="6" height="4" fill="#eef4ee"/><rect x="45" y="11" width="5" height="3" fill="#d8e8d8"/><rect x="56" y="66" width="2" height="4" fill="#eef4ee"/><rect x="145" y="37" width="2" height="4" fill="#7ac08a"/><rect x="16" y="74" width="6" height="3" fill="#c8dcc8"/><rect x="85" y="10" width="4" height="4" fill="#c8dcc8"/><rect x="80" y="10" width="2" height="4" fill="#eef4ee"/><rect x="24" y="95" width="5" height="2" fill="#b0d0b8"/><rect x="125" y="97" width="6" height="3" fill="#30a050"/><rect x="100" y="44" width="4" height="3" fill="#eef4ee"/><rect x="126" y="62" width="6" height="4" fill="#c8dcc8"/><rect x="11" y="52" width="4" height="2" fill="#7ac08a"/><rect x="22" y="59" width="6" height="4" fill="#d8e8d8"/><rect x="134" y="46" width="2" height="2" fill="#7ac08a"/><rect x="107" y="18" width="3" height="4" fill="#eef4ee"/><rect x="96" y="87" width="3" height="3" fill="#b0d0b8"/><rect x="99" y="54" width="6" height="3" fill="#e0e8e0"/><rect x="15" y="60" width="4" height="4" fill="#c8dcc8"/><rect x="77" y="82" width="3" height="2" fill="#d8e8d8"/><rect x="117" y="2" width="6" height="3" fill="#d8e8d8"/><rect x="80" y="13" width="3" height="2" fill="#2a3a30"/><rect x="55" y="75" width="3" height="4" fill="#30a050"/><rect x="130" y="28" width="5" height="2" fill="#e0e8e0"/><rect x="103" y="22" width="4" height="4" fill="#30a050"/><rect x="66" y="62" width="5" height="3" fill="#c8dcc8"/><rect x="123" y="28" width="5" height="2" fill="#b0d0b8"/><rect x="34" y="49" width="6" height="4" fill="#e0e8e0"/><rect x="14" y="84" width="3" height="2" fill="#30a050"/><rect x="95" y="57" width="3" height="4" fill="#7ac08a"/><rect x="40" y="53" width="3" height="3" fill="#eef4ee"/><rect x="66" y="66" width="3" height="4" fill="#e0e8e0"/><rect x="132" y="68" width="2" height="2" fill="#eef4ee"/><rect x="0" y="26" width="3" height="2" fill="#c8dcc8"/><rect x="90" y="34" width="6" height="4" fill="#c8dcc8"/><rect x="122" y="88" width="5" height="2" fill="#e0e8e0"/><rect x="4" y="24" width="5" height="2" fill="#c8dcc8"/><rect x="112" y="26" width="2" height="4" fill="#7ac08a"/><rect x="134" y="63" width="3" height="3" fill="#2a3a30"/><rect x="79" y="51" width="2" height="4" fill="#e0e8e0"/><rect x="119" y="85" width="2" height="3" fill="#c8dcc8"/><rect x="35" y="13" width="5" height="4" fill="#30a050"/><rect x="31" y="83" width="5" height="2" fill="#7ac08a"/><rect x="121" y="30" width="4" height="4" fill="#c8dcc8"/><rect x="117" y="98" width="2" height="4" fill="#b0d0b8"/><rect x="38" y="37" width="5" height="4" fill="#e0e8e0"/><rect x="86" y="96" width="5" height="4" fill="#c8dcc8"/><rect x="65" y="24" width="3" height="3" fill="#c8dcc8"/><rect x="84" y="39" width="4" height="4" fill="#30a050"/><rect x="84" y="57" width="5" height="2" fill="#c8dcc8"/><rect x="36" y="79" width="2" height="2" fill="#eef4ee"/><rect x="46" y="24" width="5" height="2" fill="#30a050"/><rect x="23" y="12" width="3" height="2" fill="#eef4ee"/><rect x="31" y="55" width="5" height="2" fill="#2a3a30"/><rect x="109" y="65" width="3" height="4" fill="#b0d0b8"/><rect x="37" y="88" width="5" height="3" fill="#2a3a30"/><rect x="105" y="79" width="2" height="4" fill="#7ac08a"/><rect x="81" y="31" width="6" height="4" fill="#d8e8d8"/><rect x="66" y="42" width="3" height="3" fill="#e0e8e0"/><rect x="112" y="13" width="6" height="3" fill="#b0d0b8"/><rect x="130" y="42" width="4" height="2" fill="#eef4ee"/><rect x="64" y="98" width="6" height="3" fill="#b0d0b8"/><rect x="90" y="78" width="6" height="4" fill="#eef4ee"/><rect x="146" y="91" width="3" height="4" fill="#b0d0b8"/><rect x="145" y="3" width="3" height="2" fill="#eef4ee"/><rect x="62" y="61" width="6" height="3" fill="#2a3a30"/><rect x="84" y="11" width="4" height="3" fill="#30a050"/><rect x="31" y="57" width="3" height="2" fill="#c8dcc8"/><rect x="143" y="33" width="3" height="4" fill="#2a3a30"/><rect x="37" y="15" width="2" height="3" fill="#2a3a30"/><rect x="61" y="97" width="6" height="3" fill="#eef4ee"/><rect x="47" y="76" width="6" height="2" fill="#30a050"/><rect x="8" y="51" width="3" height="4" fill="#eef4ee"/><rect x="78" y="96" width="5" height="4" fill="#d8e8d8"/><rect x="40" y="25" width="5" height="3" fill="#d8e8d8"/><rect x="36" y="67" width="5" height="2" fill="#7ac08a"/><rect x="44" y="43" width="6" height="2" fill="#e0e8e0"/><rect x="62" y="72" width="4" height="2" fill="#d8e8d8"/><rect x="37" y="51" width="5" height="4" fill="#c8dcc8"/><rect x="120" y="44" width="5" height="4" fill="#7ac08a"/><rect x="72" y="62" width="5" height="4" fill="#7ac08a"/><rect x="111" y="15" width="6" height="2" fill="#2a3a30"/><rect x="134" y="66" width="5" height="3" fill="#d8e8d8"/><rect x="82" y="6" width="4" height="4" fill="#7ac08a"/>
<rect x="6" y="2" width="14" height="12" fill="#2a2a2a"/><rect x="4" y="24" width="16" height="12" fill="#303030"/>
<rect x="36" y="14" width="18" height="16" fill="#383838"/><rect x="74" y="10" width="16" height="12" fill="#2a2a2a"/>
<rect x="72" y="34" width="14" height="12" fill="#303030"/>
<rect x="56" y="58" width="18" height="16" fill="#353535"/><rect x="0" y="56" width="20" height="20" fill="#2a2a2a"/>
<path d="M0 104 L148 122 L148 153 L0 153Z" fill="#d0a468"/>
<path d="M0 96 L148 110 L148 122 L0 104Z" fill="#3a9a50"/>
<path d="M0 125 Q60 115 100 153 H0Z" fill="#c8a070"/>
<ellipse cx="25" cy="158" rx="36" ry="16" fill="#3a2a1a"/>
<circle cx="6" cy="100" r="6" fill="#402828"/>
<circle cx="80" cy="97" r="5" fill="#f0e8e8"/><circle cx="132" cy="104" r="5" fill="#f0e0e8"/>
</svg></div>
<div class="a " style="left:421px;top:573px;width:148px;height:154px;border:1px solid;border-color:#808080 #fff #fff #808080;box-shadow:inset 1px 1px 0 #404040"></div>
<div class="a rb w" style="left:576px;top:577px;width:55px;height:25px;"></div>
<div class="a cn dis" style="left:580px;top:583px;font-size:12px;width:48px;overflow:hidden">复制指示</div>
<div class="a rb w" style="left:631px;top:577px;width:55px;height:25px;"></div>
<div class="a cn" style="left:635px;top:583px;font-size:12px;width:48px;overflow:hidden">内部<span class=m>ECN</span></div>
<div class="a rb w" style="left:576px;top:602px;width:55px;height:25px;"></div>
<div class="a cn" style="left:580px;top:608px;font-size:12px;width:48px;overflow:hidden">编写流程</div>
<div class="a rb w" style="left:631px;top:602px;width:55px;height:25px;"></div>
<div class="a cn dis" style="left:635px;top:608px;font-size:12px;width:48px;overflow:hidden"><span class=m>ECN</span>影响</div>
<div class="a rb w" style="left:576px;top:627px;width:55px;height:25px;"></div>
<div class="a cn" style="left:580px;top:633px;font-size:12px;width:48px;overflow:hidden">编写指示</div>
<div class="a rb w" style="left:631px;top:627px;width:55px;height:25px;"></div>
<div class="a cn dis" style="left:635px;top:633px;font-size:12px;width:48px;overflow:hidden"><span class=m>ECN</span>审核</div>
<div class="a rb w" style="left:576px;top:652px;width:55px;height:25px;"></div>
<div class="a cn" style="left:580px;top:658px;font-size:12px;width:48px;overflow:hidden">指示内审</div>
<div class="a rb w" style="left:631px;top:652px;width:55px;height:25px;"></div>
<div class="a cn dis" style="left:635px;top:658px;font-size:12px;width:48px;overflow:hidden">风险警告</div>
<div class="a rb w" style="left:576px;top:677px;width:55px;height:25px;"></div>
<div class="a cn dis" style="left:580px;top:683px;font-size:12px;width:48px;overflow:hidden">工具计划</div>
<div class="a rb w" style="left:631px;top:677px;width:55px;height:25px;"></div>
<div class="a cn dis" style="left:635px;top:683px;font-size:12px;width:48px;overflow:hidden">问题审核</div>
<div class="a rb w" style="left:576px;top:702px;width:55px;height:25px;"></div>
<div class="a cn dis" style="left:580px;top:708px;font-size:12px;width:48px;overflow:hidden"><span class=m>ICS</span>跟踪</div>
<div class="a rb w" style="left:631px;top:702px;width:55px;height:25px;"></div>
<div class="a cn dis" style="left:635px;top:708px;font-size:12px;width:48px;overflow:hidden">组合排版</div>
<div class="a " style="left:7px;top:733px;width:670px;height:1px;background:#808080"></div>
<div class="a " style="left:3px;top:739px;width:674px;height:1px;background:#404040"></div>
<div class="a " style="left:3px;top:69px;width:1px;height:670px;background:#fff"></div>
<div class="a " style="left:677px;top:1px;width:1080px;height:922px;background:#d4d0c8;border-top:1px solid #d4d0c8;border-left:1px solid #d4d0c8;border-right:1px solid #404040;border-bottom:1px solid #404040;box-shadow:inset 1px 1px 0 #fff,inset -1px -1px 0 #808080"></div>
<div class="a " style="left:681px;top:5px;width:1072px;height:18px;background:linear-gradient(90deg,#0a246a 0%,#0a246a 10%,#a6caf0 100%)"></div>
<svg class="a" style="left:683px;top:7px" width="16" height="14"><rect x="0.5" y="0.5" width="15" height="13" fill="#fff" stroke="#404040"/><rect x="1" y="1" width="14" height="2" fill="#0a246a"/><path d="M4 5 L12 12 M12 5 L4 12" stroke="#d8c820" stroke-width="2"/></svg>
<div class="a cn" style="left:701px;top:8px;color:#fff;font-weight:bold;font-size:11.5px;line-height:12px;font-family:Liberation Mono,monospace;letter-spacing:0.08px">Graphic Editor 9.07b2 (OO@HY-HYCAM-PC066 - Windows, pid:6800)</div>
<div class="a rb w" style="left:1702px;top:8px;width:15px;height:13px;"></div>
<div class="a rb w" style="left:1719px;top:8px;width:15px;height:13px;"></div>
<div class="a rb w" style="left:1735px;top:8px;width:15px;height:13px;"></div>
<svg class="a" style="left:1705px;top:10px" width="10" height="10"><rect x="1" y="6" width="6" height="2" fill="#000"/></svg>
<svg class="a" style="left:1722px;top:10px" width="10" height="10"><rect x="0.5" y="0.5" width="8" height="8" fill="none" stroke="#000"/><rect x="0" y="0" width="9" height="2" fill="#000"/></svg>
<svg class="a" style="left:1738px;top:10px" width="10" height="10"><path d="M1 1 L8 8 M8 1 L1 8" stroke="#000" stroke-width="1.6"/></svg>
<div class="a " style="left:681px;top:23px;width:1072px;height:57px;background:#4a8a80"></div>
<div class="a " style="left:683px;top:25px;width:654px;height:53px;background:#9ad8d8;border-top:2px solid #d0f4f4;border-left:2px solid #d0f4f4;border-bottom:2px solid #5a9a98;border-right:2px solid #5a9a98"></div>
<div class="a cn" style="left:697px;top:42px;font-family:Liberation Serif,serif;font-weight:bold;font-size:15px;line-height:16px;letter-spacing:-0.2px">File</div>
<div class="a " style="left:697px;top:59px;width:11px;height:1px;background:#000"></div>
<div class="a cn" style="left:739px;top:42px;font-family:Liberation Serif,serif;font-weight:bold;font-size:15px;line-height:16px;letter-spacing:-0.2px">Edit</div>
<div class="a " style="left:739px;top:59px;width:11px;height:1px;background:#000"></div>
<div class="a cn" style="left:780px;top:42px;font-family:Liberation Serif,serif;font-weight:bold;font-size:15px;line-height:16px;letter-spacing:-0.2px">Actions</div>
<div class="a " style="left:780px;top:59px;width:12px;height:1px;background:#000"></div>
<div class="a cn" style="left:844px;top:42px;font-family:Liberation Serif,serif;font-weight:bold;font-size:15px;line-height:16px;letter-spacing:-0.2px">Options</div>
<div class="a cn" style="left:908px;top:42px;font-family:Liberation Serif,serif;font-weight:bold;font-size:15px;line-height:16px;letter-spacing:-0.2px">Analysis</div>
<div class="a cn" style="left:977px;top:42px;font-family:Liberation Serif,serif;font-weight:bold;font-size:15px;line-height:16px;letter-spacing:-0.2px">DFM</div>
<div class="a cn" style="left:1027px;top:42px;font-family:Liberation Serif,serif;font-weight:bold;font-size:15px;line-height:16px;letter-spacing:-0.2px">Step</div>
<div class="a " style="left:1027px;top:59px;width:11px;height:1px;background:#000"></div>
<div class="a cn" style="left:1072px;top:42px;font-family:Liberation Serif,serif;font-weight:bold;font-size:15px;line-height:16px;letter-spacing:-0.2px">Rout</div>
<div class="a " style="left:1072px;top:59px;width:11px;height:1px;background:#000"></div>
<div class="a cn" style="left:1118px;top:42px;font-family:Liberation Serif,serif;font-weight:bold;font-size:15px;line-height:16px;letter-spacing:-0.2px">Windows</div>
<div class="a " style="left:1118px;top:59px;width:12px;height:1px;background:#000"></div>
<div class="a cn" style="left:1294px;top:42px;font-family:Liberation Serif,serif;font-weight:bold;font-size:15px;line-height:16px;letter-spacing:-0.2px">Help</div>
<div class="a " style="left:1339px;top:25px;width:414px;height:54px;background:#9ad8d8;border-top:2px solid #d0f4f4;border-left:2px solid #d0f4f4;border-bottom:2px solid #5a9a98;border-right:2px solid #5a9a98"></div>
<svg class="a" style="left:1344px;top:38px" width="26" height="26"><g fill="#e02020"><path d="M8 2 H25 V5 H8 L5 3.5Z"/><path d="M6 8 H23 V11 H6 L3 9.5Z"/><path d="M4 14 H21 V17 H4 L1 15.5Z"/><path d="M5 20 H19 V23 H5 L2 21.5Z"/></g></svg>
<div class="a cn" style="left:1366px;top:34px;font-family:Liberation Sans,sans-serif;font-weight:bold;font-style:italic;font-size:34px;line-height:34px;color:#1a1a80;letter-spacing:-1.5px">Fr<span style="display:inline-block;width:22px"></span>ntline</div>
<svg class="a" style="left:1399px;top:42px" width="22" height="22"><circle cx="11" cy="11" r="8.5" fill="none" stroke="#1a1a80" stroke-width="3.5"/><path d="M11 7 L15 11 L11 15 L7 11Z" fill="#e02020"/></svg>
<div class="a cn" style="left:1510px;top:29px;font-family:Liberation Serif,serif;font-weight:bold;font-size:23.5px;line-height:24px;color:#000;letter-spacing:-0.3px">Genesis 2000</div>
<div class="a cn" style="left:1533px;top:58px;font-family:Liberation Serif,serif;font-style:italic;font-weight:bold;font-size:14px;line-height:16px">Graphic Editor</div>
<div class="a cn" style="left:1651px;top:30px;font-family:Liberation Mono,monospace;font-style:italic;font-weight:bold;font-size:14px;line-height:14px;letter-spacing:0.6px">26 Jul 2014</div>
<div class="a cn" style="left:1664px;top:45px;font-family:Liberation Mono,monospace;font-style:italic;font-weight:bold;font-size:14px;line-height:14px;letter-spacing:0.5px">11:54 PM</div>
<div class="a " style="left:681px;top:80px;width:1072px;height:774px;background:#000"></div>
<div class="a " style="left:682px;top:80px;width:154px;height:773px;background:#52c8a8"></div>
<div class="a " style="left:684px;top:83px;width:150px;height:19px;background:#9ad8d8;border:1px solid #000;border-bottom-width:2px"></div>
<div class="a cn" style="left:687px;top:85px;font-family:Liberation Mono,monospace;font-weight:bold;font-size:14.5px;line-height:15px">Job : 8e0000ada0</div>
<div class="a " style="left:684px;top:102px;width:150px;height:19px;background:#9ad8d8;border:1px solid #000"></div>
<div class="a cn" style="left:687px;top:104px;font-family:Liberation Mono,monospace;font-weight:bold;font-size:14.5px;line-height:15px">Step: cam</div>
<div class="a " style="left:684px;top:123px;width:150px;height:27px;background:#52c8a8;border:1px solid #1a4a40"></div>
<div class="a " style="left:687px;top:126px;width:144px;height:21px;background:#9ad8d8;border-top:2px solid #c8f4f0;border-left:2px solid #c8f4f0;border-bottom:2px solid #3a8a78;border-right:2px solid #3a8a78"></div>
<div class="a cn" style="left:690px;top:129px;font-family:Liberation Mono,monospace;font-weight:bold;font-size:14.5px;line-height:15px">Job Matrix ...</div>
<div class="a " style="left:682px;top:154px;width:126px;height:673px;background:#2a6a5a"></div>
<div class="a " style="left:686px;top:158px;width:122px;height:669px;background:#52c8a8;border-top:2px solid #a8f0e0"></div>
<div class="a " style="left:805px;top:154px;width:31px;height:673px;background:#52c8a8"></div>
<div class="a " style="left:807px;top:156px;width:1px;height:671px;background:#2a6a5a"></div>
<div class="a " style="left:808px;top:156px;width:2px;height:671px;background:#a8f4e0"></div>
<div class="a " style="left:813px;top:156px;width:2px;height:671px;background:#a8f4e0"></div>
<div class="a " style="left:819px;top:156px;width:2px;height:671px;background:#2a6a5a"></div>
<div class="a " style="left:831px;top:156px;width:3px;height:671px;background:#a8f4e0"></div>
<div class="a " style="left:821px;top:168px;width:10px;height:452px;background:#52c8a8;border-left:2px solid #a8f4e0;border-right:1px solid #2a6a5a;border-bottom:2px solid #2a7a68"></div>
<div class="a " style="left:821px;top:620px;width:10px;height:190px;background:#48b096"></div>
<div class="a " style="left:821px;top:156px;width:10px;height:12px;background:#3a9a80"></div>
<svg class="a" style="left:821px;top:156px" width="10" height="12"><path d="M5 1 L9 11 L1 11Z" fill="#52c8a8" stroke="#a8f4e0"/></svg>
<div class="a " style="left:821px;top:810px;width:10px;height:14px;background:#3a9a80"></div>
<svg class="a" style="left:821px;top:811px" width="10" height="12"><path d="M1 1 L9 1 L5 11Z" fill="#52c8a8" stroke="#a8f4e0"/></svg>
<div class="a" style="left:682px;top:158px;width:126px;height:668px;overflow:hidden">
<div class="a" style="left:5px;top:2px;width:118px;height:34px;background:#000"></div>
<div class="a" style="left:8px;top:4px;width:14px;height:14px;background:#fff"><div class="a" style="left:2px;top:2px;width:10px;height:10px;border:2px solid #000"></div></div>
<div class="a" style="left:40px;top:4px;width:81px;height:14px;background:#fff"><div class="a" style="left:1px;top:1px;font-family:Liberation Mono,monospace;font-weight:bold;font-size:12px;line-height:12px">to</div><svg width="8" height="8" style="position:absolute;right:2px;top:4px"><path d="M0 3 L3.5 0 L4 3 L8 3.5 L4 7.5 L0 7.5 Z" fill="#000"/></svg></div>
<div class="a" style="left:8px;top:20px;width:14px;height:14px;background:#fff"><div class="a" style="left:2px;top:2px;width:10px;height:10px;border:2px solid #000"></div></div>
<div class="a" style="left:40px;top:20px;width:81px;height:14px;background:#1aa07a"><div class="a" style="left:1px;top:1px;font-family:Liberation Mono,monospace;font-weight:bold;font-size:12px;line-height:12px">ts</div><svg width="8" height="8" style="position:absolute;right:2px;top:4px"><path d="M0 3 L3.5 0 L4 3 L8 3.5 L4 7.5 L0 7.5 Z" fill="#000"/></svg></div>
<div class="a" style="left:5px;top:39px;width:118px;height:18px;background:#000"></div>
<div class="a" style="left:8px;top:41px;width:14px;height:14px;background:#fff"><div class="a" style="left:2px;top:2px;width:10px;height:10px;border:2px solid #000"></div></div>
<div class="a" style="left:40px;top:41px;width:81px;height:14px;background:#9ad8d8"><div class="a" style="left:1px;top:1px;font-family:Liberation Mono,monospace;font-weight:bold;font-size:12px;line-height:12px">plncs</div></div>
<div class="a" style="left:5px;top:60px;width:118px;height:18px;background:#000"></div>
<div class="a" style="left:8px;top:62px;width:14px;height:14px;background:#fff"><div class="a" style="left:2px;top:2px;width:10px;height:10px;border:2px solid #000"></div></div>
<div class="a" style="left:40px;top:62px;width:81px;height:14px;background:#f8c050"><div class="a" style="left:1px;top:1px;font-family:Liberation Mono,monospace;font-weight:bold;font-size:12px;line-height:12px">cs</div><svg width="8" height="8" style="position:absolute;right:2px;top:4px"><path d="M0 3 L3.5 0 L4 3 L8 3.5 L4 7.5 L0 7.5 Z" fill="#000"/></svg></div>
<div class="a" style="left:5px;top:81px;width:118px;height:18px;background:#000"></div>
<div class="a" style="left:8px;top:83px;width:14px;height:14px;background:#fff"><div class="a" style="left:2px;top:2px;width:10px;height:10px;border:2px solid #000"></div></div>
<div class="a" style="left:40px;top:83px;width:81px;height:14px;background:#9ad8d8"><div class="a" style="left:1px;top:1px;font-family:Liberation Mono,monospace;font-weight:bold;font-size:12px;line-height:12px">pln2t</div></div>
<div class="a" style="left:5px;top:102px;width:118px;height:18px;background:#000"></div>
<div class="a" style="left:8px;top:104px;width:14px;height:14px;background:#fff"><div class="a" style="left:2px;top:2px;width:10px;height:10px;border:2px solid #000"></div></div>
<div class="a" style="left:40px;top:104px;width:81px;height:14px;background:#f8c050"><div class="a" style="left:1px;top:1px;font-family:Liberation Mono,monospace;font-weight:bold;font-size:12px;line-height:12px">sig2t</div><svg width="8" height="8" style="position:absolute;right:2px;top:4px"><path d="M0 3 L3.5 0 L4 3 L8 3.5 L4 7.5 L0 7.5 Z" fill="#000"/></svg></div>
<div class="a" style="left:5px;top:123px;width:118px;height:18px;background:#000"></div>
<div class="a" style="left:8px;top:125px;width:14px;height:14px;background:#fff"><div class="a" style="left:2px;top:2px;width:10px;height:10px;border:2px solid #000"></div></div>
<div class="a" style="left:40px;top:125px;width:81px;height:14px;background:#9ad8d8"><div class="a" style="left:1px;top:1px;font-family:Liberation Mono,monospace;font-weight:bold;font-size:12px;line-height:12px">pln3b</div></div>
<div class="a" style="left:5px;top:144px;width:118px;height:18px;background:#000"></div>
<div class="a" style="left:8px;top:146px;width:14px;height:14px;background:#fff"><div class="a" style="left:2px;top:2px;width:10px;height:10px;border:2px solid #000"></div></div>
<div class="a" style="left:40px;top:146px;width:81px;height:14px;background:#f8c050"><div class="a" style="left:1px;top:1px;font-family:Liberation Mono,monospace;font-weight:bold;font-size:12px;line-height:12px">sig3b</div><svg width="8" height="8" style="position:absolute;right:2px;top:4px"><path d="M0 3 L3.5 0 L4 3 L8 3.5 L4 7.5 L0 7.5 Z" fill="#000"/></svg></div>
<div class="a" style="left:5px;top:165px;width:118px;height:18px;background:#000"></div>
<div class="a" style="left:8px;top:167px;width:14px;height:14px;background:#fff"><div class="a" style="left:2px;top:2px;width:10px;height:10px;border:2px solid #000"></div></div>
<div class="a" style="left:40px;top:167px;width:81px;height:14px;background:#9ad8d8"><div class="a" style="left:1px;top:1px;font-family:Liberation Mono,monospace;font-weight:bold;font-size:12px;line-height:12px">pln4t</div></div>
<div class="a" style="left:5px;top:186px;width:118px;height:18px;background:#000"></div>
<div class="a" style="left:8px;top:188px;width:14px;height:14px;background:#fff"><div class="a" style="left:2px;top:2px;width:10px;height:10px;border:2px solid #000"></div></div>
<div class="a" style="left:40px;top:188px;width:81px;height:14px;background:#f8c050"><div class="a" style="left:1px;top:1px;font-family:Liberation Mono,monospace;font-weight:bold;font-size:12px;line-height:12px">sig4t</div><svg width="8" height="8" style="position:absolute;right:2px;top:4px"><path d="M0 3 L3.5 0 L4 3 L8 3.5 L4 7.5 L0 7.5 Z" fill="#000"/></svg></div>
<div class="a" style="left:5px;top:207px;width:118px;height:18px;background:#000"></div>
<div class="a" style="left:8px;top:209px;width:14px;height:14px;background:#fff"><div class="a" style="left:2px;top:2px;width:10px;height:10px;border:2px solid #000"></div></div>
<div class="a" style="left:40px;top:209px;width:81px;height:14px;background:#9ad8d8"><div class="a" style="left:1px;top:1px;font-family:Liberation Mono,monospace;font-weight:bold;font-size:12px;line-height:12px">pln5b</div></div>
<div class="a" style="left:5px;top:228px;width:118px;height:18px;background:#000"></div>
<div class="a" style="left:8px;top:230px;width:14px;height:14px;background:#fff"><div class="a" style="left:2px;top:2px;width:10px;height:10px;border:2px solid #000"></div></div>
<div class="a" style="left:40px;top:230px;width:81px;height:14px;background:#f8c050"><div class="a" style="left:1px;top:1px;font-family:Liberation Mono,monospace;font-weight:bold;font-size:12px;line-height:12px">sig5b</div><svg width="8" height="8" style="position:absolute;right:2px;top:4px"><path d="M0 3 L3.5 0 L4 3 L8 3.5 L4 7.5 L0 7.5 Z" fill="#000"/></svg></div>
<div class="a" style="left:5px;top:249px;width:118px;height:18px;background:#000"></div>
<div class="a" style="left:8px;top:251px;width:14px;height:14px;background:#fff"><div class="a" style="left:2px;top:2px;width:10px;height:10px;border:2px solid #000"></div></div>
<div class="a" style="left:40px;top:251px;width:81px;height:14px;background:#9ad8d8"><div class="a" style="left:1px;top:1px;font-family:Liberation Mono,monospace;font-weight:bold;font-size:12px;line-height:12px">pln6t</div></div>
<div class="a" style="left:5px;top:270px;width:118px;height:18px;background:#000"></div>
<div class="a" style="left:8px;top:272px;width:14px;height:14px;background:#fff"><div class="a" style="left:2px;top:2px;width:10px;height:10px;border:2px solid #000"></div></div>
<div class="a" style="left:40px;top:272px;width:81px;height:14px;background:#f8c050"><div class="a" style="left:1px;top:1px;font-family:Liberation Mono,monospace;font-weight:bold;font-size:12px;line-height:12px">sig6t</div><svg width="8" height="8" style="position:absolute;right:2px;top:4px"><path d="M0 3 L3.5 0 L4 3 L8 3.5 L4 7.5 L0 7.5 Z" fill="#000"/></svg></div>
<div class="a" style="left:5px;top:291px;width:118px;height:18px;background:#000"></div>
<div class="a" style="left:8px;top:293px;width:14px;height:14px;background:#fff"><div class="a" style="left:2px;top:2px;width:10px;height:10px;border:2px solid #000"></div></div>
<div class="a" style="left:40px;top:293px;width:81px;height:14px;background:#9ad8d8"><div class="a" style="left:1px;top:1px;font-family:Liberation Mono,monospace;font-weight:bold;font-size:12px;line-height:12px">pln7b</div></div>
<div class="a" style="left:5px;top:312px;width:118px;height:18px;background:#000"></div>
<div class="a" style="left:8px;top:314px;width:14px;height:14px;background:#fff"><div class="a" style="left:2px;top:2px;width:10px;height:10px;border:2px solid #000"></div></div>
<div class="a" style="left:40px;top:314px;width:81px;height:14px;background:#f8c050"><div class="a" style="left:1px;top:1px;font-family:Liberation Mono,monospace;font-weight:bold;font-size:12px;line-height:12px">sig7b</div><svg width="8" height="8" style="position:absolute;right:2px;top:4px"><path d="M0 3 L3.5 0 L4 3 L8 3.5 L4 7.5 L0 7.5 Z" fill="#000"/></svg></div>
<div class="a" style="left:5px;top:333px;width:118px;height:18px;background:#000"></div>
<div class="a" style="left:8px;top:335px;width:14px;height:14px;background:#fff"><div class="a" style="left:2px;top:2px;width:10px;height:10px;border:2px solid #000"></div></div>
<div class="a" style="left:40px;top:335px;width:81px;height:14px;background:#9ad8d8"><div class="a" style="left:1px;top:1px;font-family:Liberation Mono,monospace;font-weight:bold;font-size:12px;line-height:12px">plnss</div></div>
<div class="a" style="left:5px;top:354px;width:118px;height:50px;background:#000"></div>
<div class="a" style="left:8px;top:356px;width:14px;height:14px;background:#fff"><div class="a" style="left:2px;top:2px;width:10px;height:10px;border:2px solid #000"></div></div>
<div class="a" style="left:40px;top:356px;width:81px;height:14px;background:#f8c050"><div class="a" style="left:1px;top:1px;font-family:Liberation Mono,monospace;font-weight:bold;font-size:12px;line-height:12px">ss</div><svg width="8" height="8" style="position:absolute;right:2px;top:4px"><path d="M0 3 L3.5 0 L4 3 L8 3.5 L4 7.5 L0 7.5 Z" fill="#000"/></svg></div>
<div class="a" style="left:8px;top:372px;width:14px;height:14px;background:#fff"><div class="a" style="left:2px;top:2px;width:10px;height:10px;border:2px solid #000"></div></div>
<div class="a" style="left:40px;top:372px;width:81px;height:14px;background:#1aa07a"><div class="a" style="left:1px;top:1px;font-family:Liberation Mono,monospace;font-weight:bold;font-size:12px;line-height:12px">bs</div><svg width="8" height="8" style="position:absolute;right:2px;top:4px"><path d="M0 3 L3.5 0 L4 3 L8 3.5 L4 7.5 L0 7.5 Z" fill="#000"/></svg></div>
<div class="a" style="left:8px;top:388px;width:14px;height:14px;background:#fff"><div class="a" style="left:2px;top:2px;width:10px;height:10px;border:2px solid #000"></div></div>
<div class="a" style="left:40px;top:388px;width:81px;height:14px;background:#fff"><div class="a" style="left:1px;top:1px;font-family:Liberation Mono,monospace;font-weight:bold;font-size:12px;line-height:12px">bo</div><svg width="8" height="8" style="position:absolute;right:2px;top:4px"><path d="M0 3 L3.5 0 L4 3 L8 3.5 L4 7.5 L0 7.5 Z" fill="#000"/></svg></div>
<div class="a" style="left:5px;top:407px;width:118px;height:50px;background:#000"></div>
<div class="a" style="left:8px;top:409px;width:14px;height:14px;background:#fff"><div class="a" style="left:2px;top:2px;width:10px;height:10px;border:2px solid #000"></div></div>
<div class="a" style="left:24px;top:409px;width:14px;height:14px;background:#3a9a20"></div>
<div class="a" style="left:40px;top:409px;width:81px;height:14px;background:#a0b8bc"><div class="a" style="left:1px;top:1px;font-family:Liberation Mono,monospace;font-weight:bold;font-size:12px;line-height:12px">drl</div></div>
<div class="a" style="left:8px;top:425px;width:14px;height:14px;background:#fff"><div class="a" style="left:2px;top:2px;width:10px;height:10px;border:2px solid #000"></div></div>
<div class="a" style="left:40px;top:425px;width:81px;height:14px;background:#a0b8bc"><div class="a" style="left:1px;top:1px;font-family:Liberation Mono,monospace;font-weight:bold;font-size:12px;line-height:12px">ldi</div></div>
<div class="a" style="left:8px;top:441px;width:14px;height:14px;background:#fff"><div class="a" style="left:2px;top:2px;width:10px;height:10px;border:2px solid #000"></div></div>
<div class="a" style="left:40px;top:441px;width:81px;height:14px;background:#d8d8d8"><div class="a" style="left:1px;top:1px;font-family:Liberation Mono,monospace;font-weight:bold;font-size:12px;line-height:12px">rout</div></div>
<div class="a" style="left:5px;top:460px;width:118px;height:210px;background:#000"></div>
<div class="a" style="left:8px;top:462px;width:14px;height:14px;background:#fff"><div class="a" style="left:2px;top:2px;width:10px;height:10px;border:2px solid #0000e0"></div></div>
<div class="a" style="left:24px;top:462px;width:14px;height:14px;background:#e82020"></div>
<div class="a" style="left:40px;top:462px;width:81px;height:14px;background:#9ad8d8"><div class="a" style="left:1px;top:1px;font-family:Liberation Mono,monospace;font-weight:bold;font-size:12px;line-height:12px">ss2</div><div style="position:absolute;right:3px;top:4px;width:7px;height:7px;border:1px solid #000;background:repeating-linear-gradient(90deg,#000 0 1px,transparent 1px 2px)"></div></div>
<div class="a" style="left:8px;top:478px;width:14px;height:14px;background:#fff"><div class="a" style="left:2px;top:2px;width:10px;height:10px;border:2px solid #000"></div></div>
<div class="a" style="left:40px;top:478px;width:81px;height:14px;background:#9ad8d8"><div class="a" style="left:1px;top:1px;font-family:Liberation Mono,monospace;font-weight:bold;font-size:12px;line-height:12px">cvia</div></div>
<div class="a" style="left:8px;top:494px;width:14px;height:14px;background:#fff"><div class="a" style="left:2px;top:2px;width:10px;height:10px;border:2px solid #000"></div></div>
<div class="a" style="left:40px;top:494px;width:81px;height:14px;background:#9ad8d8"><div class="a" style="left:1px;top:1px;font-family:Liberation Mono,monospace;font-weight:bold;font-size:12px;line-height:12px">tp</div><svg width="8" height="8" style="position:absolute;right:2px;top:4px"><path d="M0 3 L3.5 0 L4 3 L8 3.5 L4 7.5 L0 7.5 Z" fill="#000"/></svg></div>
<div class="a" style="left:8px;top:510px;width:14px;height:14px;background:#fff"><div class="a" style="left:2px;top:2px;width:10px;height:10px;border:2px solid #000"></div></div>
<div class="a" style="left:40px;top:510px;width:81px;height:14px;background:#9ad8d8"><div class="a" style="left:1px;top:1px;font-family:Liberation Mono,monospace;font-weight:bold;font-size:12px;line-height:12px">bp</div><svg width="8" height="8" style="position:absolute;right:2px;top:4px"><path d="M0 3 L3.5 0 L4 3 L8 3.5 L4 7.5 L0 7.5 Z" fill="#000"/></svg></div>
<div class="a" style="left:8px;top:526px;width:14px;height:14px;background:#fff"><div class="a" style="left:2px;top:2px;width:10px;height:10px;border:2px solid #000"></div></div>
<div class="a" style="left:40px;top:526px;width:81px;height:14px;background:#9ad8d8"><div class="a" style="left:1px;top:1px;font-family:Liberation Mono,monospace;font-weight:bold;font-size:12px;line-height:12px">dd</div><svg width="8" height="8" style="position:absolute;right:2px;top:4px"><path d="M0 3 L3.5 0 L4 3 L8 3.5 L4 7.5 L0 7.5 Z" fill="#000"/></svg></div>
<div class="a" style="left:8px;top:542px;width:14px;height:14px;background:#fff"><div class="a" style="left:2px;top:2px;width:10px;height:10px;border:2px solid #000"></div></div>
<div class="a" style="left:40px;top:542px;width:81px;height:14px;background:#9ad8d8"><div class="a" style="left:1px;top:1px;font-family:Liberation Mono,monospace;font-weight:bold;font-size:12px;line-height:12px">outline</div><svg width="8" height="8" style="position:absolute;right:2px;top:4px"><path d="M0 3 L3.5 0 L4 3 L8 3.5 L4 7.5 L0 7.5 Z" fill="#000"/></svg></div>
<div class="a" style="left:8px;top:558px;width:14px;height:14px;background:#fff"><div class="a" style="left:2px;top:2px;width:10px;height:10px;border:2px solid #000"></div></div>
<div class="a" style="left:40px;top:558px;width:81px;height:14px;background:#9ad8d8"><div class="a" style="left:1px;top:1px;font-family:Liberation Mono,monospace;font-weight:bold;font-size:12px;line-height:12px">panel</div><svg width="8" height="8" style="position:absolute;right:2px;top:4px"><path d="M0 3 L3.5 0 L4 3 L8 3.5 L4 7.5 L0 7.5 Z" fill="#000"/></svg></div>
<div class="a" style="left:8px;top:574px;width:14px;height:14px;background:#fff"><div class="a" style="left:2px;top:2px;width:10px;height:10px;border:2px solid #000"></div></div>
<div class="a" style="left:40px;top:574px;width:81px;height:14px;background:#9ad8d8"><div class="a" style="left:1px;top:1px;font-family:Liberation Mono,monospace;font-weight:bold;font-size:12px;line-height:12px">npth</div></div>
<div class="a" style="left:8px;top:590px;width:14px;height:14px;background:#fff"><div class="a" style="left:2px;top:2px;width:10px;height:10px;border:2px solid #000"></div></div>
<div class="a" style="left:40px;top:590px;width:81px;height:14px;background:#9ad8d8"><div class="a" style="left:1px;top:1px;font-family:Liberation Mono,monospace;font-weight:bold;font-size:12px;line-height:12px">dwk</div></div>
<div class="a" style="left:8px;top:606px;width:14px;height:14px;background:#fff"><div class="a" style="left:2px;top:2px;width:10px;height:10px;border:2px solid #000"></div></div>
<div class="a" style="left:40px;top:606px;width:81px;height:14px;background:#9ad8d8"><div class="a" style="left:1px;top:1px;font-family:Liberation Mono,monospace;font-weight:bold;font-size:12px;line-height:12px">d</div></div>
<div class="a" style="left:8px;top:622px;width:14px;height:14px;background:#fff"><div class="a" style="left:2px;top:2px;width:10px;height:10px;border:2px solid #000"></div></div>
<div class="a" style="left:40px;top:622px;width:81px;height:14px;background:#9ad8d8"><div class="a" style="left:1px;top:1px;font-family:Liberation Mono,monospace;font-weight:bold;font-size:12px;line-height:12px">to.d</div></div>
<div class="a" style="left:8px;top:638px;width:14px;height:14px;background:#fff"><div class="a" style="left:2px;top:2px;width:10px;height:10px;border:2px solid #000"></div></div>
<div class="a" style="left:40px;top:638px;width:81px;height:14px;background:#9ad8d8"><div class="a" style="left:1px;top:1px;font-family:Liberation Mono,monospace;font-weight:bold;font-size:12px;line-height:12px">ts.d</div></div>
<div class="a" style="left:8px;top:654px;width:14px;height:14px;background:#fff"><div class="a" style="left:2px;top:2px;width:10px;height:10px;border:2px solid #000"></div></div>
<div class="a" style="left:40px;top:654px;width:81px;height:14px;background:#9ad8d8"><div class="a" style="left:1px;top:1px;font-family:Liberation Mono,monospace;font-weight:bold;font-size:12px;line-height:12px">cs.d</div></div>
</div>
<div class="a " style="left:682px;top:826px;width:154px;height:27px;background:#52c8a8;border-top:1px solid #a8f0e0"></div>
<div class="a " style="left:684px;top:832px;width:150px;height:19px;background:#f8c050;border:1px solid #000"></div>
<div class="a cn" style="left:687px;top:835px;font-family:Liberation Mono,monospace;font-weight:bold;font-size:12.5px;line-height:13px">Selected : 0</div>
<div class="a " style="left:1590px;top:80px;width:163px;height:410px;background:#4a8a80"></div>
<div class="a " style="left:1591px;top:81px;width:162px;height:162px;background:#000"></div>
<div class="a " style="left:1591px;top:245px;width:162px;height:242px;background:#000"></div>
<div class="a " style="left:1590px;top:241px;width:163px;height:4px;background:#b8ecec"></div>
<div class="a " style="left:1590px;top:485px;width:163px;height:3px;background:#808080"></div>
<div class="a " style="left:1590px;top:488px;width:163px;height:2px;background:#3a8a78"></div>
<div class="a" style="left:1593px;top:83px;width:38px;height:38px;background:#9ad8d8;border-top:4px solid #d0f4f4;border-left:4px solid #d0f4f4;border-bottom:4px solid #5a8a88;border-right:4px solid #5a8a88"><div class="a" style="left:0px;top:0px;width:30px;height:30px;border:1px solid #000"></div>
<svg class="a" style="left:-4px;top:-4px" width="38" height="38"><g transform="translate(19 19) scale(1.0) translate(-19 -19)"><rect x="13" y="15" width="12" height="12" stroke="#000" stroke-width="2" fill="none"/><path d="M15 15 V10 H12 L19 5 L26 10 H23 V15Z" fill="#000"/></g></svg></div>
<div class="a" style="left:1633px;top:83px;width:38px;height:38px;background:#9ad8d8;border-top:4px solid #d0f4f4;border-left:4px solid #d0f4f4;border-bottom:4px solid #5a8a88;border-right:4px solid #5a8a88"><div class="a" style="left:0px;top:0px;width:30px;height:30px;border:1px solid #000"></div>
<svg class="a" style="left:-4px;top:-4px" width="38" height="38"><g transform="translate(19 19) scale(1.0) translate(-19 -19)"><rect x="13" y="11" width="12" height="12" stroke="#000" stroke-width="2" fill="none"/><path d="M15 23 V27 H12 L19 32 L26 27 H23 V23Z" fill="#000"/></g></svg></div>
<div class="a" style="left:1673px;top:83px;width:38px;height:38px;background:#9ad8d8;border-top:4px solid #d0f4f4;border-left:4px solid #d0f4f4;border-bottom:4px solid #5a8a88;border-right:4px solid #5a8a88"><div class="a" style="left:0px;top:0px;width:30px;height:30px;border:1px solid #000"></div>
<svg class="a" style="left:-4px;top:-4px" width="38" height="38"><g transform="translate(19 19) scale(1.0) translate(-19 -19)"><path d="M9 19 L19 10 L29 19" stroke="#000" stroke-width="2" fill="none"/><rect x="12" y="18" width="14" height="11" stroke="#000" stroke-width="2" fill="none"/><rect x="19" y="22" width="4" height="7" stroke="#000" stroke-width="2" fill="none"/><rect x="15" y="21" width="2" height="2" fill="#000"/></g></svg></div>
<div class="a" style="left:1713px;top:83px;width:38px;height:38px;background:#9ad8d8;border-top:4px solid #d0f4f4;border-left:4px solid #d0f4f4;border-bottom:4px solid #5a8a88;border-right:4px solid #5a8a88"><div class="a" style="left:0px;top:0px;width:30px;height:30px;border:1px solid #000"></div>
<svg class="a" style="left:-4px;top:-4px" width="38" height="38"><g transform="translate(19 19) scale(1.0) translate(-19 -19)"><rect x="10" y="10" width="18" height="18" stroke="#000" stroke-width="2" fill="none"/><path d="M19 10 V28 M10 23 H28" stroke="#000" stroke-width="1.5"/><text x="21" y="20" font-size="5" font-family="Liberation Mono">XY</text></g></svg></div>
<div class="a" style="left:1593px;top:123px;width:38px;height:38px;background:#9ad8d8;border-top:4px solid #d0f4f4;border-left:4px solid #d0f4f4;border-bottom:4px solid #5a8a88;border-right:4px solid #5a8a88"><div class="a" style="left:0px;top:0px;width:30px;height:30px;border:1px solid #000"></div>
<svg class="a" style="left:-4px;top:-4px" width="38" height="38"><g transform="translate(19 19) scale(1.0) translate(-19 -19)"><rect x="16" y="13" width="12" height="13" stroke="#000" stroke-width="2" fill="none"/><path d="M8 19 L12 15 V17 H18 V22 H12 V23Z" fill="#000"/></g></svg></div>
<div class="a" style="left:1633px;top:123px;width:38px;height:38px;background:#9ad8d8;border-top:4px solid #d0f4f4;border-left:4px solid #d0f4f4;border-bottom:4px solid #5a8a88;border-right:4px solid #5a8a88"><div class="a" style="left:0px;top:0px;width:30px;height:30px;border:1px solid #000"></div>
<svg class="a" style="left:-4px;top:-4px" width="38" height="38"><g transform="translate(19 19) scale(1.0) translate(-19 -19)"><rect x="10" y="13" width="12" height="13" stroke="#000" stroke-width="2" fill="none"/><path d="M30 19 L26 15 V17 H20 V22 H26 V23Z" fill="#000"/></g></svg></div>
<div class="a" style="left:1673px;top:123px;width:38px;height:38px;background:#9ad8d8;border-top:4px solid #d0f4f4;border-left:4px solid #d0f4f4;border-bottom:4px solid #5a8a88;border-right:4px solid #5a8a88"><div class="a" style="left:0px;top:0px;width:30px;height:30px;border:1px solid #000"></div>
<svg class="a" style="left:-4px;top:-4px" width="38" height="38"><g transform="translate(19 19) scale(1.0) translate(-19 -19)"><rect x="19" y="14" width="10" height="11" stroke="#000" stroke-width="2" fill="none"/><path d="M10 17 L14 13 L14 16 Q18 17 16 24 L13 24" stroke="#000" stroke-width="2" fill="none"/></g></svg></div>
<div class="a" style="left:1713px;top:123px;width:38px;height:38px;background:#9ad8d8;border-top:4px solid #d0f4f4;border-left:4px solid #d0f4f4;border-bottom:4px solid #5a8a88;border-right:4px solid #5a8a88"><div class="a" style="left:0px;top:0px;width:30px;height:30px;border:1px solid #000"></div>
<svg class="a" style="left:-4px;top:-4px" width="38" height="38"><g transform="translate(19 19) scale(1.0) translate(-19 -19)"><path d="M27 13 H12 V22 H27 V27 H10" stroke="#000" stroke-width="2" fill="none"/><path d="M29 11 L25 15 M9 25 L13 29" stroke="#000"/></g></svg></div>
<div class="a" style="left:1593px;top:163px;width:38px;height:38px;background:#9ad8d8;border-top:4px solid #d0f4f4;border-left:4px solid #d0f4f4;border-bottom:4px solid #5a8a88;border-right:4px solid #5a8a88"><div class="a" style="left:0px;top:0px;width:30px;height:30px;border:1px solid #000"></div>
<svg class="a" style="left:-4px;top:-4px" width="38" height="38"><g transform="translate(19 19) scale(1.0) translate(-19 -19)"><rect x="12" y="12" width="14" height="14" stroke="#000" stroke-width="2" fill="none"/><path d="M19 5 L22 9 H16Z M19 33 L22 29 H16Z M5 19 L9 16 V22Z M33 19 L29 16 V22Z" fill="#000"/></g></svg></div>
<div class="a" style="left:1633px;top:163px;width:38px;height:38px;background:#9ad8d8;border-top:4px solid #d0f4f4;border-left:4px solid #d0f4f4;border-bottom:4px solid #5a8a88;border-right:4px solid #5a8a88"><div class="a" style="left:0px;top:0px;width:30px;height:30px;border:1px solid #000"></div>
<svg class="a" style="left:-4px;top:-4px" width="38" height="38"><g transform="translate(19 19) scale(1.0) translate(-19 -19)"><rect x="15" y="15" width="8" height="8" stroke="#000" stroke-width="2" fill="none"/><path d="M19 8 L22 12 H16Z M19 30 L22 26 H16Z M8 19 L12 16 V22Z M30 19 L26 16 V22Z" fill="#000"/></g></svg></div>
<div class="a" style="left:1673px;top:163px;width:38px;height:38px;background:#9ad8d8;border-top:4px solid #d0f4f4;border-left:4px solid #d0f4f4;border-bottom:4px solid #5a8a88;border-right:4px solid #5a8a88"><div class="a" style="left:0px;top:0px;width:30px;height:30px;border:1px solid #000"></div>
<svg class="a" style="left:-4px;top:-4px" width="38" height="38"><g transform="translate(19 19) scale(1.0) translate(-19 -19)"><text x="9" y="25" font-size="13" font-weight="bold" font-family="Liberation Sans">1:2</text></g></svg></div>
<div class="a" style="left:1713px;top:163px;width:38px;height:38px;background:#9ad8d8;border-top:4px solid #d0f4f4;border-left:4px solid #d0f4f4;border-bottom:4px solid #5a8a88;border-right:4px solid #5a8a88"><div class="a" style="left:0px;top:0px;width:30px;height:30px;border:1px solid #000"></div>
<svg class="a" style="left:-4px;top:-4px" width="38" height="38"><g transform="translate(19 19) scale(1.0) translate(-19 -19)"><rect x="11" y="11" width="16" height="16" stroke="#000" stroke-width="2" fill="none"/><text x="15" y="25" font-size="13" font-weight="bold" font-family="Liberation Sans">?</text></g></svg></div>
<div class="a" style="left:1593px;top:203px;width:38px;height:38px;background:#9ad8d8;border-top:4px solid #d0f4f4;border-left:4px solid #d0f4f4;border-bottom:4px solid #5a8a88;border-right:4px solid #5a8a88"><div class="a" style="left:0px;top:0px;width:30px;height:30px;border:1px solid #000"></div>
<svg class="a" style="left:-4px;top:-4px" width="38" height="38"><g transform="translate(19 19) scale(1.0) translate(-19 -19)"><path d="M9 11 H28" stroke="#000" stroke-width="3"/><circle cx="29" cy="11" r="3" fill="none" stroke="#000" stroke-width="2"/><path d="M14 16 H31 V20 H14 L10 18Z" fill="none" stroke="#000" stroke-width="1.3"/><path d="M15 24 Q20 20 26 23 Q29 27 24 31 Q18 34 15 30 Q13 27 15 24Z" fill="none" stroke="#000" stroke-width="1.2"/><circle cx="19" cy="26" r="1" fill="#000"/><circle cx="23" cy="25" r="1" fill="#000"/></g></svg></div>
<div class="a" style="left:1633px;top:203px;width:38px;height:38px;background:#9ad8d8;border-top:4px solid #d0f4f4;border-left:4px solid #d0f4f4;border-bottom:4px solid #5a8a88;border-right:4px solid #5a8a88"><div class="a" style="left:0px;top:0px;width:30px;height:30px;border:1px solid #000"></div>
<svg class="a" style="left:-4px;top:-4px" width="38" height="38"><g transform="translate(19 19) scale(1.0) translate(-19 -19)"><path d="M12 8 V30 M19 8 V30 M26 8 V30 M8 12 H30 M8 19 H30 M8 26 H30" stroke="#d09090" stroke-width="0.7"/></g></svg></div>
<div class="a" style="left:1673px;top:203px;width:38px;height:38px;background:#9ad8d8;border-top:4px solid #d0f4f4;border-left:4px solid #d0f4f4;border-bottom:4px solid #5a8a88;border-right:4px solid #5a8a88"><div class="a" style="left:-2px;top:-2px;width:34px;height:34px;border:4px solid #b02020"></div>
<svg class="a" style="left:-4px;top:-4px" width="38" height="38"><g transform="translate(19 19) scale(1.0) translate(-19 -19)"><rect x="22" y="9" width="8" height="22" fill="none" stroke="#000"/><circle cx="26" cy="13" r="2.5" fill="#e02020"/><circle cx="26" cy="20" r="2" fill="none" stroke="#000"/><circle cx="26" cy="26" r="2" fill="none" stroke="#000"/><path d="M10 8 V17 H19 V30" stroke="#e02020" fill="none"/><path d="M17 11 V25 H11" stroke="#1010e0" fill="none"/><circle cx="17" cy="11" r="2" fill="#1010e0"/><circle cx="10" cy="17" r="2" fill="#e02020"/><circle cx="11" cy="26" r="2" fill="#1010e0"/></g></svg></div>
<div class="a" style="left:1713px;top:203px;width:38px;height:38px;background:#9ad8d8;border-top:4px solid #d0f4f4;border-left:4px solid #d0f4f4;border-bottom:4px solid #5a8a88;border-right:4px solid #5a8a88"><div class="a" style="left:-2px;top:-2px;width:34px;height:34px;border:4px solid #b02020"></div>
<svg class="a" style="left:-4px;top:-4px" width="38" height="38"><g transform="translate(19 19) scale(1.0) translate(-19 -19)"><rect x="22" y="9" width="8" height="22" fill="none" stroke="#000"/><circle cx="26" cy="13" r="2.5" fill="#e02020"/><circle cx="26" cy="20" r="2" fill="none" stroke="#000"/><circle cx="26" cy="26" r="2" fill="none" stroke="#000"/><path d="M11 8 V17 M17 11 V25 H11" stroke="#000" fill="none"/><circle cx="17" cy="11" r="2" fill="#000"/><circle cx="11" cy="17" r="2" fill="#000"/><circle cx="11" cy="26" r="2" fill="#000"/></g></svg></div>
<div class="a" style="left:1593px;top:247px;width:38px;height:38px;background:#fff;border-top:4px solid #f4f4f4;border-left:4px solid #f4f4f4;border-bottom:4px solid #808080;border-right:4px solid #808080"><div class="a" style="left:0px;top:0px;width:30px;height:30px;border:1px solid #000"></div>
<svg class="a" style="left:-4px;top:-4px" width="38" height="38"><g transform="translate(19 19) scale(1.15) translate(-19 -19)"><rect x="7" y="7" width="24" height="24" fill="#000"/><rect x="11" y="14" width="13" height="13" fill="none" stroke="#fff"/><circle cx="17.5" cy="20.5" r="4.5" fill="#fff"/><path d="M22 16 L29 9 M25 9 H29 V13" stroke="#fff" stroke-width="2" fill="none"/></g></svg></div>
<div class="a" style="left:1633px;top:247px;width:38px;height:38px;background:#fff;border-top:4px solid #f4f4f4;border-left:4px solid #f4f4f4;border-bottom:4px solid #808080;border-right:4px solid #808080"><div class="a" style="left:0px;top:0px;width:30px;height:30px;border:1px solid #000"></div>
<svg class="a" style="left:-4px;top:-4px" width="38" height="38"><g transform="translate(19 19) scale(1.15) translate(-19 -19)"><rect x="19" y="9" width="8" height="8" fill="none" stroke="#e02020" stroke-width="1.5"/><rect x="9" y="23" width="5" height="5" fill="none" stroke="#1010e0" stroke-width="1.5"/><path d="M9 23 L19 9 M14 28 L27 17" stroke="#000" stroke-width="0.7"/></g></svg></div>
<div class="a" style="left:1673px;top:247px;width:38px;height:38px;background:#fff;border-top:4px solid #f4f4f4;border-left:4px solid #f4f4f4;border-bottom:4px solid #808080;border-right:4px solid #808080"><div class="a" style="left:0px;top:0px;width:30px;height:30px;border:1px solid #000"></div>
<svg class="a" style="left:-4px;top:-4px" width="38" height="38"><g transform="translate(19 19) scale(1.15) translate(-19 -19)"><rect x="7" y="18" width="24" height="4" fill="#000"/><path d="M8 18 V13 M10 18 V15 M12 18 V13 M14 18 V15 M16 18 V13 M18 18 V15 M20 18 V13 M22 18 V15 M24 18 V13 M26 18 V15 M28 18 V13 M30 18 V15" stroke="#000"/></g></svg></div>
<div class="a" style="left:1713px;top:247px;width:38px;height:38px;background:#fff;border-top:4px solid #f4f4f4;border-left:4px solid #f4f4f4;border-bottom:4px solid #808080;border-right:4px solid #808080"><div class="a" style="left:0px;top:0px;width:30px;height:30px;border:1px solid #000"></div>
<svg class="a" style="left:-4px;top:-4px" width="38" height="38"><g transform="translate(19 19) scale(1.15) translate(-19 -19)"><rect x="10" y="10" width="18" height="18" fill="none" stroke="#000" stroke-dasharray="1.5 1.5"/><path d="M16 13 H22 L25 16 V22 L22 25 H16 L13 22 V16Z" fill="#000"/></g></svg></div>
<div class="a" style="left:1593px;top:287px;width:38px;height:38px;background:#d0d0d0;border-top:4px solid #f4f4f4;border-left:4px solid #f4f4f4;border-bottom:4px solid #808080;border-right:4px solid #808080"><div class="a" style="left:0px;top:0px;width:30px;height:30px;border:1px solid #000"></div>
<svg class="a" style="left:-4px;top:-4px" width="38" height="38"><g transform="translate(19 19) scale(1.15) translate(-19 -19)"><path d="M11 11 V24 H24" stroke="#1010e0" stroke-width="3" fill="none"/><circle cx="11" cy="11" r="4" fill="#1010e0"/><circle cx="11" cy="24" r="4" fill="#1010e0"/><circle cx="24" cy="24" r="4" fill="#1010e0"/><circle cx="26" cy="11" r="3.5" fill="#e02020"/></g></svg></div>
<div class="a" style="left:1633px;top:287px;width:38px;height:38px;background:#d0d0d0;border-top:4px solid #f4f4f4;border-left:4px solid #f4f4f4;border-bottom:4px solid #808080;border-right:4px solid #808080"><div class="a" style="left:0px;top:0px;width:30px;height:30px;border:1px solid #000"></div>
<svg class="a" style="left:-4px;top:-4px" width="38" height="38"><g transform="translate(19 19) scale(1.15) translate(-19 -19)"><rect x="16" y="16" width="6" height="6" fill="#1010e0"/><path d="M13 13 L25 25 M25 13 L13 25" stroke="#000" stroke-width="1.5"/></g></svg></div>
<div class="a" style="left:1673px;top:287px;width:38px;height:38px;background:#d0d0d0;border-top:4px solid #f4f4f4;border-left:4px solid #f4f4f4;border-bottom:4px solid #808080;border-right:4px solid #808080"><div class="a" style="left:0px;top:0px;width:30px;height:30px;border:1px solid #000"></div>
<svg class="a" style="left:-4px;top:-4px" width="38" height="38"><g transform="translate(19 19) scale(1.15) translate(-19 -19)"><circle cx="14" cy="25" r="3" fill="none" stroke="#1010e0" stroke-width="1.5"/><circle cx="26" cy="12" r="4" fill="#e02020"/><path d="M17 22 L22 17 M20 17 H22 V19" stroke="#000" fill="none"/></g></svg></div>
<div class="a" style="left:1713px;top:287px;width:38px;height:38px;background:#d0d0d0;border-top:4px solid #f4f4f4;border-left:4px solid #f4f4f4;border-bottom:4px solid #808080;border-right:4px solid #808080"><div class="a" style="left:0px;top:0px;width:30px;height:30px;border:1px solid #000"></div>
<svg class="a" style="left:-4px;top:-4px" width="38" height="38"><g transform="translate(19 19) scale(1.15) translate(-19 -19)"><circle cx="14" cy="25" r="3.5" fill="#1010e0"/><circle cx="26" cy="12" r="4" fill="#e02020"/><path d="M17 22 L22 17 M20 17 H22 V19" stroke="#000" fill="none"/></g></svg></div>
<div class="a" style="left:1593px;top:327px;width:38px;height:38px;background:#d0d0d0;border-top:4px solid #f4f4f4;border-left:4px solid #f4f4f4;border-bottom:4px solid #808080;border-right:4px solid #808080"><div class="a" style="left:0px;top:0px;width:30px;height:30px;border:1px solid #000"></div>
<svg class="a" style="left:-4px;top:-4px" width="38" height="38"><g transform="translate(19 19) scale(1.15) translate(-19 -19)"><path d="M10 23 L27 10" stroke="#e02020" stroke-width="2.5"/><path d="M11 27 H28" stroke="#1010e0" stroke-width="3"/><path d="M22 20 L19 17 M19 19 V17 H21" stroke="#000" fill="none"/></g></svg></div>
<div class="a" style="left:1633px;top:327px;width:38px;height:38px;background:#d0d0d0;border-top:4px solid #f4f4f4;border-left:4px solid #f4f4f4;border-bottom:4px solid #808080;border-right:4px solid #808080"><div class="a" style="left:0px;top:0px;width:30px;height:30px;border:1px solid #000"></div>
<svg class="a" style="left:-4px;top:-4px" width="38" height="38"><g transform="translate(19 19) scale(1.15) translate(-19 -19)"><path d="M10 25 L20 17" stroke="#1010e0" stroke-width="2.5"/><path d="M20 17 L28 10" stroke="#e02020" stroke-width="2.5"/><path d="M21 24 L24 21 M22 21 H24 V23" stroke="#000" fill="none"/></g></svg></div>
<div class="a" style="left:1673px;top:327px;width:38px;height:38px;background:#d0d0d0;border-top:4px solid #f4f4f4;border-left:4px solid #f4f4f4;border-bottom:4px solid #808080;border-right:4px solid #808080"><div class="a" style="left:0px;top:0px;width:30px;height:30px;border:1px solid #000"></div>
<svg class="a" style="left:-4px;top:-4px" width="38" height="38"><g transform="translate(19 19) scale(1.15) translate(-19 -19)"><path d="M16 12 Q25 12 24 19 Q23 25 17 25" stroke="#000" stroke-width="2" fill="none"/><path d="M15 25 L19 22 V28Z" fill="#000"/></g></svg></div>
<div class="a" style="left:1713px;top:327px;width:38px;height:38px;background:#d0d0d0;border-top:4px solid #f4f4f4;border-left:4px solid #f4f4f4;border-bottom:4px solid #808080;border-right:4px solid #808080"><div class="a" style="left:0px;top:0px;width:30px;height:30px;border:1px solid #000"></div>
<svg class="a" style="left:-4px;top:-4px" width="38" height="38"><g transform="translate(19 19) scale(1.15) translate(-19 -19)"><path d="M19 9 V29" stroke="#000"/><path d="M8 12 H16 V27 M8 19 H16" stroke="#1010e0" stroke-width="2.5" fill="none"/><path d="M30 12 H22 V27 M22 19 H30" stroke="#e02020" stroke-width="2.5" fill="none"/></g></svg></div>
<div class="a" style="left:1593px;top:367px;width:38px;height:38px;background:#d0d0d0;border-top:4px solid #f4f4f4;border-left:4px solid #f4f4f4;border-bottom:4px solid #808080;border-right:4px solid #808080"><div class="a" style="left:0px;top:0px;width:30px;height:30px;border:1px solid #000"></div>
<svg class="a" style="left:-4px;top:-4px" width="38" height="38"><g transform="translate(19 19) scale(1.15) translate(-19 -19)"><rect x="9" y="22" width="8" height="8" fill="none" stroke="#1010e0"/><circle cx="13" cy="26" r="2.5" fill="#1010e0"/><rect x="20" y="9" width="9" height="9" fill="#e02020"/><circle cx="24.5" cy="13.5" r="2.5" fill="#d0d0d0"/><path d="M17 21 L20 18 M18 18 H20 V20" stroke="#000" fill="none"/></g></svg></div>
<div class="a" style="left:1633px;top:367px;width:38px;height:38px;background:#d0d0d0;border-top:4px solid #f4f4f4;border-left:4px solid #f4f4f4;border-bottom:4px solid #808080;border-right:4px solid #808080"><div class="a" style="left:0px;top:0px;width:30px;height:30px;border:1px solid #000"></div>
<svg class="a" style="left:-4px;top:-4px" width="38" height="38"><g transform="translate(19 19) scale(1.15) translate(-19 -19)"><path d="M10 19 H28" stroke="#e02020" stroke-width="3" stroke-linecap="round"/><path d="M17 19 H21" stroke="#1010e0" stroke-width="3"/></g></svg></div>
<div class="a" style="left:1673px;top:367px;width:38px;height:38px;background:#d0d0d0;border-top:4px solid #f4f4f4;border-left:4px solid #f4f4f4;border-bottom:4px solid #808080;border-right:4px solid #808080"><div class="a" style="left:0px;top:0px;width:30px;height:30px;border:1px solid #000"></div>
<svg class="a" style="left:-4px;top:-4px" width="38" height="38"><g transform="translate(19 19) scale(1.15) translate(-19 -19)"><path d="M9 9 V29 M29 9 V29 M9 19 H29" stroke="#000" stroke-width="0.8"/><path d="M9 19 H29" stroke="#1010e0"/><rect x="16" y="15" width="6" height="8" fill="#d0d0d0" stroke="#1010e0"/></g></svg></div>
<div class="a" style="left:1713px;top:367px;width:38px;height:38px;background:#d0d0d0;border-top:4px solid #f4f4f4;border-left:4px solid #f4f4f4;border-bottom:4px solid #808080;border-right:4px solid #808080"><div class="a" style="left:0px;top:0px;width:30px;height:30px;border:1px solid #000"></div>
<svg class="a" style="left:-4px;top:-4px" width="38" height="38"><g transform="translate(19 19) scale(1.15) translate(-19 -19)"><rect x="10" y="11" width="13" height="10" fill="#1010e0"/><rect x="17" y="17" width="12" height="11" fill="#1010e0"/><circle cx="14" cy="15" r="3" fill="#d0d0d0"/><circle cx="23" cy="22" r="3.5" fill="#d0d0d0"/></g></svg></div>
<div class="a" style="left:1593px;top:407px;width:38px;height:38px;background:#d0d0d0;border-top:4px solid #f4f4f4;border-left:4px solid #f4f4f4;border-bottom:4px solid #808080;border-right:4px solid #808080"><div class="a" style="left:0px;top:0px;width:30px;height:30px;border:1px solid #000"></div>
<svg class="a" style="left:-4px;top:-4px" width="38" height="38"><g transform="translate(19 19) scale(1.15) translate(-19 -19)"><path d="M10 27 L19 13 L27 27" stroke="#e02020" stroke-width="2" fill="none"/><path d="M10 27 H27" stroke="#1010e0" stroke-width="2.5"/><path d="M19 24 V20 M17 22 L19 20 L21 22" stroke="#000" fill="none"/></g></svg></div>
<div class="a" style="left:1633px;top:407px;width:38px;height:38px;background:#d0d0d0;border-top:4px solid #f4f4f4;border-left:4px solid #f4f4f4;border-bottom:4px solid #808080;border-right:4px solid #808080"><div class="a" style="left:0px;top:0px;width:30px;height:30px;border:1px solid #000"></div>
<svg class="a" style="left:-4px;top:-4px" width="38" height="38"><g transform="translate(19 19) scale(1.15) translate(-19 -19)"><path d="M8 31 L19 7 L30 31" stroke="#e02020" stroke-width="2" fill="none"/><path d="M11 31 L19 22 L27 31" stroke="#1010e0" stroke-width="2.5" fill="none"/><path d="M19 19 V14 M17 16 L19 14 L21 16" stroke="#000" fill="none"/></g></svg></div>
<div class="a" style="left:1673px;top:407px;width:38px;height:38px;background:#d0d0d0;border-top:4px solid #f4f4f4;border-left:4px solid #f4f4f4;border-bottom:4px solid #808080;border-right:4px solid #808080"><div class="a" style="left:0px;top:0px;width:30px;height:30px;border:1px solid #000"></div>
<svg class="a" style="left:-4px;top:-4px" width="38" height="38"><g transform="translate(19 19) scale(1.15) translate(-19 -19)"><path d="M11 27 L15 11 H23 L27 27" stroke="#e02020" stroke-width="3" fill="none"/><path d="M8 31 L11 23 H27 L30 31" stroke="#1010e0" stroke-width="3" fill="none"/><path d="M19 20 V15 M17 17 L19 15 L21 17" stroke="#000" fill="none"/></g></svg></div>
<div class="a" style="left:1713px;top:407px;width:38px;height:38px;background:#d0d0d0;border-top:4px solid #f4f4f4;border-left:4px solid #f4f4f4;border-bottom:4px solid #808080;border-right:4px solid #808080"><div class="a" style="left:0px;top:0px;width:30px;height:30px;border:1px solid #000"></div>
<svg class="a" style="left:-4px;top:-4px" width="38" height="38"><g transform="translate(19 19) scale(1.15) translate(-19 -19)"><path d="M11 25 L15 11 H23 L27 25" stroke="#e02020" stroke-width="3" fill="none"/><path d="M7 25 H31" stroke="#1010e0" stroke-width="3"/><path d="M19 20 V15 M17 17 L19 15 L21 17 M7 22 L11 28 M11 22 L7 28 M27 22 L31 28 M31 22 L27 28" stroke="#000" fill="none"/></g></svg></div>
<div class="a" style="left:1593px;top:447px;width:38px;height:38px;background:#f8c050;border-top:4px solid #fce8b0;border-left:4px solid #fce8b0;border-bottom:4px solid #a08040;border-right:4px solid #a08040"><div class="a" style="left:0px;top:0px;width:30px;height:30px;border:1px solid #000"></div>
<svg class="a" style="left:-4px;top:-4px" width="38" height="38"><g transform="translate(19 19) scale(1.15) translate(-19 -19)"><path d="M16 12 L16 27 L19 24 L22 30 L24 29 L21 23 L25 23Z" fill="#000"/></g></svg></div>
<div class="a" style="left:1633px;top:447px;width:38px;height:38px;background:#f8c050;border-top:4px solid #fce8b0;border-left:4px solid #fce8b0;border-bottom:4px solid #a08040;border-right:4px solid #a08040"><div class="a" style="left:0px;top:0px;width:30px;height:30px;border:1px solid #000"></div>
<svg class="a" style="left:-4px;top:-4px" width="38" height="38"><g transform="translate(19 19) scale(1.15) translate(-19 -19)"><rect x="10" y="10" width="18" height="18" fill="none" stroke="#e02020" stroke-width="2"/><path d="M16 12 L16 27 L19 24 L22 30 L24 29 L21 23 L25 23Z" fill="#000"/></g></svg></div>
<div class="a" style="left:1673px;top:447px;width:38px;height:38px;background:#f8c050;border-top:4px solid #fce8b0;border-left:4px solid #fce8b0;border-bottom:4px solid #a08040;border-right:4px solid #a08040"><div class="a" style="left:0px;top:0px;width:30px;height:30px;border:1px solid #000"></div>
<svg class="a" style="left:-4px;top:-4px" width="38" height="38"><g transform="translate(19 19) scale(1.15) translate(-19 -19)"><path d="M14 10 H28 V28 H14 L10 23 V15Z" fill="none" stroke="#e02020" stroke-width="2"/><path d="M16 12 L16 27 L19 24 L22 30 L24 29 L21 23 L25 23Z" fill="#000"/></g></svg></div>
<div class="a" style="left:1713px;top:447px;width:38px;height:38px;background:#f8c050;border-top:4px solid #fce8b0;border-left:4px solid #fce8b0;border-bottom:4px solid #a08040;border-right:4px solid #a08040"><div class="a" style="left:0px;top:0px;width:30px;height:30px;border:1px solid #000"></div>
<svg class="a" style="left:-4px;top:-4px" width="38" height="38"><g transform="translate(19 19) scale(1.15) translate(-19 -19)"><path d="M10 8 V20 M11 28 H17 V18 H21 V14 H27" stroke="#000" fill="none"/><circle cx="10" cy="20" r="2.5" fill="#e02020"/><circle cx="11" cy="28" r="2.5" fill="#20c020"/><circle cx="27" cy="14" r="2.5" fill="#20c020"/><path d="M21 20 L21 32 L23 30 L25 34 L27 33 L25 29 L28 29Z" fill="#000"/></g></svg></div>
<div class="a " style="left:1590px;top:490px;width:163px;height:320px;background:#000;border-left:2px solid #3a8a78;border-right:2px solid #b8ecec"></div>
<div class="a " style="left:1592px;top:593px;width:160px;height:112px;background:#f00;border:1px solid #d07020"></div>
<div class="a " style="left:1620px;top:648px;width:114px;height:24px;border:2px solid #40e0f0"></div>
<svg class="a" style="left:1616px;top:667px" width="9" height="9"><path d="M1 1 L8 8 M8 1 L1 8" stroke="#c8c8c8"/></svg>
<div class="a " style="left:1590px;top:808px;width:163px;height:2px;background:#b8ecec"></div>
<div class="a " style="left:1590px;top:810px;width:163px;height:43px;background:#55c8a8;border-left:2px solid #3a8a78"></div>
<div class="a cn" style="left:1595px;top:818px;font-family:Liberation Mono,monospace;font-weight:bold;font-size:12.5px;line-height:13px;letter-spacing:1.3px">X = -0.058487"</div>
<div class="a cn" style="left:1595px;top:833px;font-family:Liberation Mono,monospace;font-weight:bold;font-size:12.5px;line-height:13px;letter-spacing:1.3px">Y = 11.411086"</div>
<div class="a " style="left:681px;top:853px;width:1072px;height:3px;background:#000"></div>
<div class="a " style="left:681px;top:856px;width:1072px;height:32px;background:#fffdd0"></div>
<div class="a " style="left:682px;top:856px;width:31px;height:31px;background:#fffdd0;border:3px solid #e8e4c0;border-top-color:#fff;border-left-color:#fff"></div>
<div class="a " style="left:688px;top:862px;width:19px;height:19px;border:1px solid #000"></div>
<div class="a " style="left:715px;top:856px;width:31px;height:31px;background:#fffdd0;border:3px solid #e8e4c0;border-top-color:#fff;border-left-color:#fff"></div>
<div class="a " style="left:721px;top:862px;width:19px;height:19px;border:1px solid #000"></div>
<svg class="a" style="left:689px;top:863px" width="18" height="18"><path d="M3 3 L14 14 M3 3 H7 M3 3 V7 M14 14 H10 M14 14 V10" stroke="#000" fill="none"/><path d="M2 16 H16" stroke="#000"/></svg>
<svg class="a" style="left:722px;top:863px" width="18" height="18"><path d="M2 16 L14 3 M2 16 H16" stroke="#000" stroke-width="1.5" fill="none"/><path d="M6 4 V8 H8" stroke="#000" fill="none"/><text x="9" y="15" font-size="5">ox</text></svg>
<div class="a " style="left:747px;top:856px;width:28px;height:31px;background:#fffdd0;border:4px solid #5aa898"></div>
<svg class="a" style="left:752px;top:862px" width="18" height="18"><path d="M5 1 H16 V16 H1 V5Z M8 1 V16 M1 9 H16" stroke="#000" stroke-width="1.3" fill="none"/></svg>
<div class="a cn" style="left:779px;top:865px;font-family:Liberation Mono,monospace;font-weight:bold;font-size:12.5px;line-height:13px;letter-spacing:-0.3px">X Y :</div>
<div class="a " style="left:824px;top:856px;width:1px;height:31px;background:#000"></div>
<div class="a " style="left:827px;top:858px;width:168px;height:27px;background:#fffdd0;border:2px solid #a8a088;border-bottom-color:#d8d0a8;border-right-color:#d8d0a8"></div>
<svg class="a" style="left:830px;top:860px" width="5" height="16"><path d="M2.5 1 V14 M0.5 1 H4.5 M0.5 14 H4.5" stroke="#000" stroke-dasharray="1 1"/></svg>
<div class="a " style="left:997px;top:856px;width:31px;height:31px;background:#fffdd0;border:4px solid #5aa898"></div>
<div class="a " style="left:1003px;top:862px;width:19px;height:19px;border:1px solid #000"></div>
<svg class="a" style="left:1003px;top:862px" width="19" height="19"><path d="M9.5 4 V12" stroke="#000" stroke-width="2"/><rect x="8.5" y="14" width="2" height="2" fill="#000"/></svg>
<div class="a " style="left:1028px;top:856px;width:2px;height:31px;background:#5aa898"></div>
<div class="a cn" style="left:1032px;top:865px;font-family:Liberation Mono,monospace;font-weight:bold;font-size:12.5px;line-height:13px;letter-spacing:-0.45px">&lt;M1&gt; - Select first corner</div>
<div class="a " style="left:1673px;top:856px;width:80px;height:32px;background:#52c8a8;border-left:2px solid #000"></div>
<div class="a " style="left:1681px;top:859px;width:70px;height:27px;background:#52c8a8;border-top:2px solid #b0f0e0;border-left:2px solid #b0f0e0;border-bottom:2px solid #2a7a68;border-right:2px solid #2a7a68"></div>
<div class="a cn" style="left:1688px;top:864px;font-family:Liberation Serif,serif;font-weight:bold;font-size:14px;line-height:15px">Inch</div>
<div class="a " style="left:1731px;top:869px;width:13px;height:6px;background:#a8e8e0;border:1px solid #2a7a68;border-top-color:#e0fff8;border-left-color:#e0fff8"></div>
<div class="a " style="left:681px;top:887px;width:1072px;height:4px;background:#5a8a88;border-top:1px solid #000;border-bottom:1px solid #000"></div>
<div class="a " style="left:682px;top:891px;width:1069px;height:27px;background:#b0ffff;border:1px solid #000;box-shadow:inset 2px 2px 0 #e0ffff,inset -2px -2px 0 #70b0b0"></div>
<div class="a cn" style="left:1133px;top:898px;font-family:Liberation Mono,monospace;font-weight:bold;font-size:12px;line-height:12px;letter-spacing:-0.15px">2 r12 Pads were selected</div>
<svg class="a" style="left:0;top:0;z-index:-1" width="1920" height="1056"><path d="M1758 130 H1835 L1852 140 H1875" stroke="#dcdcdc" stroke-width="2" fill="none"/><path d="M1758 134 H1830 L1845 150 L1860 156 H1875" stroke="#dcdcdc" stroke-width="2" fill="none"/><path d="M1758 143 H1823 L1838 155 L1850 164 H1875" stroke="#dcdcdc" stroke-width="2" fill="none"/><path d="M1758 180 L1790 155 L1800 160 H1828 L1840 168 H1875" stroke="#dcdcdc" stroke-width="2" fill="none"/><path d="M1758 196 L1790 172 L1800 176 H1855 L1865 172 H1875" stroke="#dcdcdc" stroke-width="2" fill="none"/><path d="M1758 217 H1815 L1835 232 L1838 240 H1875" stroke="#dcdcdc" stroke-width="2" fill="none"/><path d="M1758 232 H1800 L1830 248 H1875" stroke="#dcdcdc" stroke-width="2" fill="none"/><path d="M1758 237 H1800 L1840 256 H1875" stroke="#dcdcdc" stroke-width="2" fill="none"/><path d="M1758 243 H1795 L1825 262 H1875" stroke="#dcdcdc" stroke-width="2" fill="none"/><path d="M1758 248 H1790 L1825 268 H1875" stroke="#dcdcdc" stroke-width="2" fill="none"/><path d="M1758 254 H1788 L1820 274 H1875" stroke="#dcdcdc" stroke-width="2" fill="none"/><path d="M1758 345 H1795" stroke="#dcdcdc" stroke-width="2" fill="none"/><path d="M1758 352 H1845 L1855 358 H1875" stroke="#dcdcdc" stroke-width="2" fill="none"/><path d="M1758 357 H1850 L1860 364 H1875" stroke="#dcdcdc" stroke-width="2" fill="none"/><path d="M1758 364 H1830 V360 H1845 L1855 368 H1875" stroke="#dcdcdc" stroke-width="2" fill="none"/><path d="M1758 368 H1845 L1855 372 H1875" stroke="#dcdcdc" stroke-width="2" fill="none"/><path d="M1758 375 H1830 L1840 372 H1875" stroke="#dcdcdc" stroke-width="2" fill="none"/><path d="M1758 378 H1855 L1865 375 H1875" stroke="#dcdcdc" stroke-width="2" fill="none"/><path d="M1830 340 H1850 L1860 345 H1875" stroke="#dcdcdc" stroke-width="2" fill="none"/><path d="M1797 460 V492 L1758 520" stroke="#dcdcdc" stroke-width="2" fill="none"/><path d="M1803 455 V495 L1758 528" stroke="#dcdcdc" stroke-width="2" fill="none"/><path d="M1812 450 V500 L1758 540" stroke="#dcdcdc" stroke-width="2" fill="none"/><path d="M1818 465 V505 L1758 550" stroke="#dcdcdc" stroke-width="2" fill="none"/><path d="M1828 470 V510 L1770 556" stroke="#dcdcdc" stroke-width="2" fill="none"/><path d="M1838 475 V505 L1800 532" stroke="#dcdcdc" stroke-width="2" fill="none"/><path d="M1797 460 L1815 445 H1875" stroke="#dcdcdc" stroke-width="2" fill="none"/><path d="M1803 455 L1818 452 H1875" stroke="#dcdcdc" stroke-width="2" fill="none"/><path d="M1812 450 L1825 462 H1875" stroke="#dcdcdc" stroke-width="2" fill="none"/><path d="M1818 465 L1830 470 H1875" stroke="#dcdcdc" stroke-width="2" fill="none"/><path d="M1828 470 L1835 475 H1875" stroke="#dcdcdc" stroke-width="2" fill="none"/><path d="M1758 560 L1800 540 H1875" stroke="#dcdcdc" stroke-width="2" fill="none"/><path d="M1780 558 L1800 555 H1875" stroke="#dcdcdc" stroke-width="2" fill="none"/><path d="M1758 600 L1790 575 H1875" stroke="#dcdcdc" stroke-width="2" fill="none"/><path d="M1758 592 L1790 565 H1875" stroke="#dcdcdc" stroke-width="2" fill="none"/><path d="M1758 585 L1785 558 H1875" stroke="#dcdcdc" stroke-width="2" fill="none"/><path d="M1758 578 L1785 549 H1875" stroke="#dcdcdc" stroke-width="2" fill="none"/><path d="M1758 718 H1785 L1800 700 V675 L1815 660 H1875" stroke="#dcdcdc" stroke-width="2" fill="none"/><path d="M1758 712 H1780 L1793 695 V672 L1810 652 H1875" stroke="#dcdcdc" stroke-width="2" fill="none"/><path d="M1758 705 H1775 L1787 690 V668 L1805 645 H1875" stroke="#dcdcdc" stroke-width="2" fill="none"/><path d="M1758 700 H1770 L1780 688 V665 L1800 655 H1875" stroke="#dcdcdc" stroke-width="2" fill="none"/><path d="M1758 740 H1810 L1825 750 H1875" stroke="#dcdcdc" stroke-width="2" fill="none"/><path d="M1758 745 H1805 L1825 760 H1875" stroke="#dcdcdc" stroke-width="2" fill="none"/><path d="M1758 752 H1800 L1830 770 H1875" stroke="#dcdcdc" stroke-width="2" fill="none"/><path d="M1758 758 H1795 L1830 778 H1875" stroke="#dcdcdc" stroke-width="2" fill="none"/><path d="M1790 727 L1810 740 H1875" stroke="#dcdcdc" stroke-width="2" fill="none"/><path d="M1600 935 H1795 V840 L1810 825 H1875" stroke="#dcdcdc" stroke-width="2" fill="none"/><path d="M1605 940 H1800 V845 L1815 832 H1875" stroke="#dcdcdc" stroke-width="2" fill="none"/><path d="M1610 945 H1810 V850 L1825 840 H1875" stroke="#dcdcdc" stroke-width="2" fill="none"/><path d="M1615 950 H1815 V860 L1830 850 H1875" stroke="#dcdcdc" stroke-width="2" fill="none"/><path d="M1620 955 H1825 V870 L1835 860 H1875" stroke="#dcdcdc" stroke-width="2" fill="none"/><path d="M1760 810 L1790 830 V850" stroke="#dcdcdc" stroke-width="2" fill="none"/><path d="M1770 810 L1800 820" stroke="#dcdcdc" stroke-width="2" fill="none"/><path d="M72 741 V868 L135 884 H680" stroke="#dcdcdc" stroke-width="1.6" fill="none"/><path d="M78 741 V865 L139 890 H680" stroke="#dcdcdc" stroke-width="1.6" fill="none"/><path d="M84 741 V862 L143 896 H680" stroke="#dcdcdc" stroke-width="1.6" fill="none"/><path d="M90 741 V859 L147 902 H680" stroke="#dcdcdc" stroke-width="1.6" fill="none"/><path d="M96 741 V856 L151 908 H680" stroke="#dcdcdc" stroke-width="1.6" fill="none"/><path d="M146 741 V858 L190 880 H680" stroke="#dcdcdc" stroke-width="1.6" fill="none"/><path d="M151 741 V858 L190 883 H680" stroke="#dcdcdc" stroke-width="1.6" fill="none"/><path d="M156 741 V858 L190 886 H680" stroke="#dcdcdc" stroke-width="1.6" fill="none"/><path d="M232 741 V752 L248 770 H350 L368 752 V741" stroke="#dcdcdc" stroke-width="1.6" fill="none"/><path d="M236 741 V754 L251 772 H347 L364 754 V741" stroke="#dcdcdc" stroke-width="1.6" fill="none"/><path d="M240 741 V756 L254 774 H344 L360 756 V741" stroke="#dcdcdc" stroke-width="1.6" fill="none"/><path d="M244 741 V758 L257 776 H341 L356 758 V741" stroke="#dcdcdc" stroke-width="1.6" fill="none"/><path d="M262 741 V748 H282 V741 M300 741 V748 H318 V741" stroke="#dcdcdc" stroke-width="1.6" fill="none"/><path d="M371 795 V769 L416 741" stroke="#dcdcdc" stroke-width="1.6" fill="none"/><path d="M425 857 H473 L489 845 H645" stroke="#dcdcdc" stroke-width="1.6" fill="none"/><path d="M657 883 L664 875 V809" stroke="#dcdcdc" stroke-width="1.6" fill="none"/><path d="M599 786 H641" stroke="#dcdcdc" stroke-width="1.6" fill="none"/><path d="M183 790 V760 L200 745" stroke="#dcdcdc" stroke-width="1.6" fill="none"/><path d="M420 760 H480 L490 750" stroke="#dcdcdc" stroke-width="1.6" fill="none"/><path d="M350 1014 H420 L440 1000 H680" stroke="#dcdcdc" stroke-width="1.6" fill="none"/><path d="M370 1022 H440 L455 1012 H680" stroke="#dcdcdc" stroke-width="1.6" fill="none"/><path d="M1210 960 V1025" stroke="#dcdcdc" stroke-width="1.6" fill="none"/><path d="M1218 960 V1025" stroke="#dcdcdc" stroke-width="1.6" fill="none"/><path d="M1226 960 V1025" stroke="#dcdcdc" stroke-width="1.6" fill="none"/><path d="M1234 960 V1025" stroke="#dcdcdc" stroke-width="1.6" fill="none"/><path d="M1000 945 L1100 955 L1180 990 V1025" stroke="#dcdcdc" stroke-width="1.6" fill="none"/><path d="M1004 945 L1104 955 L1184 990 V1025" stroke="#dcdcdc" stroke-width="1.6" fill="none"/><path d="M1008 945 L1108 955 L1188 990 V1025" stroke="#dcdcdc" stroke-width="1.6" fill="none"/><path d="M1012 945 L1112 955 L1192 990 V1025" stroke="#dcdcdc" stroke-width="1.6" fill="none"/><path d="M1016 945 L1116 955 L1196 990 V1025" stroke="#dcdcdc" stroke-width="1.6" fill="none"/><path d="M1130 950 H1400" stroke="#dcdcdc" stroke-width="1.6" fill="none"/><path d="M1140 953 H1400" stroke="#dcdcdc" stroke-width="1.6" fill="none"/></svg>
<div class="a cn" style="left:1757px;top:311px;font-family:Liberation Serif,serif;color:#e01010;font-size:22px;line-height:22px;font-weight:bold">D</div>
<div class="a rb w" style="left:1868px;top:2px;width:16px;height:14px;"></div>
<div class="a rb w" style="left:1885px;top:2px;width:16px;height:14px;"></div>
<div class="a rb w" style="left:1902px;top:2px;width:16px;height:14px;"></div>
<svg class="a" style="left:1871px;top:5px" width="10" height="9"><rect x="1" y="6" width="6" height="2" fill="#000"/></svg>
<svg class="a" style="left:1888px;top:4px" width="10" height="10"><rect x="3.5" y="0.5" width="6" height="5" fill="none" stroke="#000"/><rect x="3" y="0" width="7" height="2" fill="#000"/><rect x="0.5" y="3.5" width="6" height="5" fill="#d4d0c8" stroke="#000"/><rect x="0" y="3" width="7" height="2" fill="#000"/></svg>
<svg class="a" style="left:1905px;top:4px" width="10" height="10"><path d="M1 1 L8 8 M8 1 L1 8" stroke="#000" stroke-width="1.6"/></svg>
<svg class="a" style="left:2px;top:1px" width="17" height="17"><rect x="0" y="0" width="17" height="17" fill="#b06060"/><rect x="1.5" y="1.5" width="14" height="14" fill="#e8e8f0"/><circle cx="8.5" cy="8.5" r="6.5" fill="#1020b0"/><path d="M7 3 Q10 6 8 9 Q7 12 9 14" stroke="#8a9a30" stroke-width="2" fill="none"/></svg>
<svg class="a" style="left:8px;top:75px" width="17" height="17"><rect x="0" y="0" width="17" height="17" fill="#b06060"/><rect x="1.5" y="1.5" width="14" height="14" fill="#e8e8f0"/><circle cx="8.5" cy="8.5" r="6.5" fill="#1020b0"/><path d="M7 3 Q10 6 8 9 Q7 12 9 14" stroke="#8a9a30" stroke-width="2" fill="none"/></svg>
<div class="a " style="left:149px;top:795px;width:271px;height:75px;background:#fff;border:3px solid #e00808;box-shadow:3px 3px 3px #8a8a8a"></div>
<div class="a cn" style="left:158px;top:804px;font-size:16px;font-weight:bold;letter-spacing:4px;line-height:18px">二次干膜请出双面！</div>
<div class="a" style="left:700px;top:923px;width:920px;height:60px;overflow:hidden"><div class="a" style="left:12px;top:-7px;white-space:nowrap;font-size:36px;line-height:40px;font-weight:900;letter-spacing:2.8px;transform:scaleX(1.3);transform-origin:0 0;color:#cfcfcf;text-shadow:-1px 0px 0 #cfcfcf,1px 0px 0 #cfcfcf,0px -1px 0 #cfcfcf,0px 1px 0 #cfcfcf,-1px -1px 0 #cfcfcf,1px 1px 0 #cfcfcf,-1px 1px 0 #cfcfcf,1px -1px 0 #cfcfcf,-2px 0px 0 #2020ff,2px 0px 0 #2020ff,0px -2px 0 #2020ff,0px 2px 0 #2020ff,-2px -1px 0 #2020ff,2px 1px 0 #2020ff,-1px 2px 0 #2020ff,1px -2px 0 #2020ff,-2px 1px 0 #2020ff,2px -1px 0 #2020ff,-1px -2px 0 #2020ff,1px 2px 0 #2020ff,-1.5px -1.5px 0 #2020ff,1.5px 1.5px 0 #2020ff,-1.5px 1.5px 0 #2020ff,1.5px -1.5px 0 #2020ff">深圳市必有德计算机软件技术有限公司</div></div>
<div class="a " style="left:677px;top:921px;width:1080px;height:2px;background:#404040"></div>
<div class="a " style="left:0px;top:1025px;width:1920px;height:31px;background:#d4d0c8"></div>
<div class="a " style="left:0px;top:1025px;width:1920px;height:2px;background:#f4f4f0"></div>
<div class="a " style="left:1px;top:1028px;width:58px;height:24px;border:1px solid;border-color:#808080 #fff #fff #808080"></div>
<div class="a " style="left:62px;top:1028px;width:57px;height:24px;border:1px solid;border-color:#808080 #fff #fff #808080"></div>
<div class="a " style="left:122px;top:1028px;width:247px;height:24px;border:1px solid;border-color:#808080 #fff #fff #808080"></div>
<div class="a " style="left:372px;top:1028px;width:1547px;height:24px;border:1px solid;border-color:#808080 #fff #fff #808080"></div>
<div class="a " style="left:0px;top:1053px;width:1920px;height:1px;background:#fff"></div>
<svg class="a" style="left:62px;top:1048px" width="36" height="8"><circle cx="8" cy="9" r="7" fill="#9ad020" stroke="#5a8a10"/><circle cx="20" cy="9" r="7" fill="#40a0f0" stroke="#2060a0"/></svg>
<div class="a " style="left:1757px;top:68px;width:1163px;height:1px;background:#404040"></div>
<div class="a " style="left:1919px;top:67px;width:1px;height:958px;background:#fff"></div>
<svg class="a" style="left:1810px;top:1002px" width="110" height="54">
<defs><linearGradient id="pill" x1="0" y1="0" x2="0" y2="1"><stop offset="0" stop-color="#fafafa"/><stop offset="1" stop-color="#dcdcdc"/></linearGradient></defs>
<rect x="36" y="8" width="72" height="38" rx="19" fill="url(#pill)" stroke="#9a9a9a"/>
<circle cx="27" cy="26.5" r="23.5" fill="#eaf6ee" stroke="#8a8a8a"/>
<circle cx="27" cy="26.5" r="21" fill="#44cc60"/>
<path d="M6.2 23.5 A21 21 0 0 1 47.8 23.5 Z" fill="#108a48"/>
<ellipse cx="27" cy="10" rx="6" ry="2" fill="#4aaa70"/>
<text x="10" y="32" font-size="13.5" fill="#f0fff0" font-family="Liberation Sans">54%</text>
<path d="M58 14 L62 19 H59.5 V24 H56.5 V19 H54Z" fill="#e05040"/>
<path d="M58 37 L62 32 H59.5 V27 H56.5 V32 H54Z" fill="#20904a"/>
<text x="74" y="23" font-size="10" fill="#222" font-family="Liberation Sans">7.7K/s</text>
<text x="74" y="38" font-size="10" fill="#222" font-family="Liberation Sans">4.9K/s</text>
</svg>
<svg class="a" style="left:0;top:0" width="1920" height="1056"><path d="M968.5 469.5 H1308.5 V472.5 H1311.5 V469.5 H1342.5 V472.5 H1345.5 V469.5 H1463.5 V553.5 H1458.5 V558.5 H1463.5 V564.5 H968.5 Z" fill="none" stroke="#fff"/><rect x="972" y="552" width="14" height="9" fill="#f00"/><rect x="999" y="552" width="14" height="9" fill="#f00"/><rect x="1036" y="552" width="14" height="9" fill="#f00"/><rect x="1062" y="552" width="14" height="9" fill="#f00"/><rect x="1099" y="552" width="14" height="9" fill="#f00"/><rect x="1126" y="552" width="14" height="9" fill="#f00"/><rect x="1163" y="552" width="14" height="9" fill="#f00"/><rect x="1189" y="552" width="14" height="9" fill="#f00"/><rect x="1226" y="552" width="14" height="9" fill="#f00"/><rect x="1253" y="552" width="14" height="9" fill="#f00"/><rect x="1290" y="552" width="14" height="9" fill="#f00"/><rect x="1316" y="552" width="14" height="9" fill="#f00"/><rect x="1353" y="552" width="14" height="9" fill="#f00"/><rect x="1380" y="552" width="14" height="9" fill="#f00"/><rect x="1416" y="552" width="14" height="9" fill="#f00"/><rect x="1443" y="552" width="14" height="9" fill="#f00"/><rect x="975.4" y="477.4" width="4" height="4" fill="#5aa028"/><rect x="999.8" y="485.2" width="2" height="2" fill="#5aa028"/><rect x="1013.8" y="485.2" width="2" height="2" fill="#5aa028"/><rect x="1029.9" y="485.2" width="2" height="2" fill="#5aa028"/><rect x="1043.9" y="485.2" width="2" height="2" fill="#5aa028"/><rect x="1053.8" y="485.2" width="2" height="2" fill="#5aa028"/><rect x="1061.9" y="485.2" width="2" height="2" fill="#5aa028"/><rect x="1092.9" y="485.2" width="2" height="2" fill="#5aa028"/><rect x="1053.8" y="488.3" width="2" height="2" fill="#5aa028"/><rect x="1057.8" y="490.6" width="2" height="2" fill="#5aa028"/><rect x="1071.8" y="488.8" width="2" height="2" fill="#5aa028"/><rect x="1074.0" y="486.5" width="2" height="2" fill="#5aa028"/><rect x="986.8" y="498.7" width="2" height="2" fill="#5aa028"/><rect x="990.8" y="500.9" width="2" height="2" fill="#5aa028"/><rect x="994.0" y="498.1" width="2" height="5" fill="#5aa028"/><rect x="996.7" y="498.1" width="2" height="5" fill="#5aa028"/><rect x="1007.9" y="497.8" width="2" height="2" fill="#5aa028"/><rect x="1023.7" y="497.8" width="2" height="2" fill="#5aa028"/><rect x="1039.8" y="497.8" width="2" height="2" fill="#5aa028"/><rect x="987.7" y="505.3" width="2" height="5" fill="#5aa028"/><rect x="994.9" y="505.3" width="2" height="5" fill="#5aa028"/><rect x="1007.9" y="509.9" width="2" height="2" fill="#5aa028"/><rect x="1023.7" y="509.9" width="2" height="2" fill="#5aa028"/><rect x="1039.8" y="509.9" width="2" height="2" fill="#5aa028"/><rect x="1048.8" y="503.6" width="2" height="2" fill="#5aa028"/><rect x="1057.8" y="500.3" width="2" height="5" fill="#5aa028"/><rect x="1069.0" y="501.3" width="3" height="4" fill="#5aa028"/><rect x="1071.3" y="500.0" width="2" height="2" fill="#5aa028"/><rect x="1074.0" y="505.9" width="2" height="2" fill="#5aa028"/><rect x="1079.0" y="507.7" width="2" height="2" fill="#5aa028"/><rect x="1092.9" y="507.7" width="2" height="2" fill="#5aa028"/><rect x="1000.7" y="516.7" width="2" height="2" fill="#5aa028"/><rect x="1003.8" y="516.7" width="2" height="2" fill="#5aa028"/><rect x="1006.8" y="516.7" width="2" height="2" fill="#5aa028"/><rect x="1009.9" y="516.7" width="2" height="2" fill="#5aa028"/><rect x="1013.0" y="516.7" width="2" height="2" fill="#5aa028"/><rect x="1016.0" y="516.7" width="2" height="2" fill="#5aa028"/><rect x="1000.7" y="527.0" width="2" height="2" fill="#5aa028"/><rect x="1003.8" y="527.0" width="2" height="2" fill="#5aa028"/><rect x="1006.8" y="527.0" width="2" height="2" fill="#5aa028"/><rect x="1009.9" y="527.0" width="2" height="2" fill="#5aa028"/><rect x="1013.0" y="527.0" width="2" height="2" fill="#5aa028"/><rect x="1016.0" y="527.0" width="2" height="2" fill="#5aa028"/><rect x="1054.7" y="512.9" width="2" height="2" fill="#5aa028"/><rect x="1057.7" y="512.9" width="2" height="2" fill="#5aa028"/><rect x="1060.8" y="512.9" width="2" height="2" fill="#5aa028"/><rect x="1063.9" y="512.9" width="2" height="2" fill="#5aa028"/><rect x="1066.9" y="512.9" width="2" height="2" fill="#5aa028"/><rect x="1070.0" y="512.9" width="2" height="2" fill="#5aa028"/><rect x="1073.0" y="512.9" width="2" height="2" fill="#5aa028"/><rect x="1054.7" y="519.8" width="2" height="2" fill="#5aa028"/><rect x="1060.1" y="518.9" width="2" height="2" fill="#5aa028"/><rect x="1065.0" y="518.9" width="2" height="2" fill="#5aa028"/><rect x="1070.0" y="519.8" width="2" height="2" fill="#5aa028"/><rect x="1070.0" y="523.0" width="2" height="2" fill="#5aa028"/><rect x="1071.8" y="525.2" width="2" height="2" fill="#5aa028"/><rect x="1071.8" y="527.9" width="2" height="2" fill="#5aa028"/><rect x="1070.0" y="530.2" width="2" height="2" fill="#5aa028"/><rect x="1046.4" y="527.0" width="5" height="2" fill="#5aa028"/><rect x="1053.8" y="527.0" width="2" height="2" fill="#5aa028"/><rect x="1056.9" y="527.9" width="2" height="2" fill="#5aa028"/><rect x="1059.6" y="526.6" width="2" height="2" fill="#5aa028"/><rect x="1063.7" y="527.9" width="2" height="2" fill="#5aa028"/><rect x="980.9" y="536.0" width="2" height="2" fill="#5aa028"/><rect x="977.8" y="538.7" width="2" height="2" fill="#5aa028"/><rect x="977.8" y="540.9" width="2" height="2" fill="#5aa028"/><rect x="978.7" y="543.6" width="2" height="2" fill="#5aa028"/><rect x="980.9" y="545.9" width="2" height="2" fill="#5aa028"/><rect x="984.5" y="545.9" width="2" height="2" fill="#5aa028"/><rect x="988.6" y="545.4" width="2" height="2" fill="#5aa028"/><rect x="991.3" y="545.9" width="2" height="2" fill="#5aa028"/><rect x="994.0" y="545.9" width="2" height="2" fill="#5aa028"/><rect x="997.1" y="545.9" width="2" height="2" fill="#5aa028"/><rect x="1001.2" y="545.9" width="2" height="2" fill="#5aa028"/><rect x="1005.7" y="545.9" width="2" height="2" fill="#5aa028"/><rect x="1006.6" y="543.6" width="2" height="2" fill="#5aa028"/><rect x="1006.6" y="540.9" width="2" height="2" fill="#5aa028"/><rect x="1006.6" y="538.2" width="2" height="2" fill="#5aa028"/><rect x="1003.0" y="537.8" width="2" height="2" fill="#5aa028"/><rect x="1000.3" y="535.5" width="2" height="2" fill="#5aa028"/><rect x="1002.1" y="534.6" width="2" height="2" fill="#5aa028"/><rect x="998.9" y="532.4" width="2" height="2" fill="#5aa028"/><rect x="989.9" y="533.3" width="2" height="2" fill="#5aa028"/><rect x="989.9" y="536.0" width="2" height="2" fill="#5aa028"/><rect x="985.0" y="538.2" width="2" height="2" fill="#5aa028"/><rect x="985.0" y="540.9" width="2" height="2" fill="#5aa028"/><rect x="989.9" y="540.9" width="2" height="2" fill="#5aa028"/><rect x="994.0" y="540.0" width="2" height="2" fill="#5aa028"/><rect x="999.8" y="540.9" width="2" height="2" fill="#5aa028"/><rect x="985.9" y="531.1" width="2" height="2" fill="#5aa028"/><rect x="974.2" y="549.9" width="2" height="2" fill="#5aa028"/><rect x="976.9" y="549.9" width="2" height="2" fill="#5aa028"/><rect x="979.6" y="549.9" width="2" height="2" fill="#5aa028"/><rect x="982.3" y="549.9" width="2" height="2" fill="#5aa028"/><rect x="985.0" y="549.9" width="2" height="2" fill="#5aa028"/><rect x="992.2" y="549.9" width="2" height="2" fill="#5aa028"/><rect x="1009.6" y="549.0" width="5" height="2" fill="#5aa028"/><rect x="991.6" y="557.0" width="4" height="4" fill="#5aa028"/><rect x="1022.7" y="553.9" width="4" height="4" fill="#5aa028"/><rect x="1033.5" y="553.8" width="2" height="5" fill="#5aa028"/><rect x="1050.6" y="553.5" width="2" height="2" fill="#5aa028"/><rect x="1052.4" y="556.2" width="2" height="2" fill="#5aa028"/><rect x="1055.4" y="558.0" width="5" height="2" fill="#5aa028"/><rect x="1059.6" y="551.1" width="2" height="5" fill="#5aa028"/><rect x="1045.2" y="531.1" width="2" height="2" fill="#5aa028"/><rect x="1043.0" y="532.8" width="2" height="2" fill="#5aa028"/><rect x="1040.7" y="536.4" width="2" height="2" fill="#5aa028"/><rect x="1043.4" y="536.0" width="2" height="2" fill="#5aa028"/><rect x="1045.2" y="538.2" width="2" height="2" fill="#5aa028"/><rect x="1047.9" y="540.9" width="2" height="2" fill="#5aa028"/><rect x="1052.0" y="541.8" width="2" height="2" fill="#5aa028"/><rect x="1040.7" y="543.6" width="2" height="2" fill="#5aa028"/><rect x="1043.9" y="545.9" width="2" height="2" fill="#5aa028"/><rect x="1038.9" y="548.1" width="2" height="2" fill="#5aa028"/><rect x="1058.7" y="533.7" width="2" height="2" fill="#5aa028"/><rect x="1069.1" y="535.1" width="2" height="2" fill="#5aa028"/><rect x="1064.4" y="537.8" width="5" height="2" fill="#5aa028"/><rect x="1061.0" y="540.0" width="2" height="2" fill="#5aa028"/><rect x="1062.8" y="543.6" width="2" height="2" fill="#5aa028"/><rect x="1060.5" y="545.9" width="2" height="2" fill="#5aa028"/><rect x="1067.1" y="545.9" width="5" height="2" fill="#5aa028"/><rect x="1073.0" y="545.9" width="5" height="2" fill="#5aa028"/><rect x="1071.3" y="542.7" width="2" height="2" fill="#5aa028"/><rect x="1074.9" y="542.7" width="2" height="2" fill="#5aa028"/><rect x="1079.0" y="549.0" width="2" height="2" fill="#5aa028"/><rect x="1082.4" y="531.1" width="5" height="2" fill="#5aa028"/><rect x="1083.9" y="530.9" width="2" height="5" fill="#5aa028"/><rect x="1092.0" y="531.9" width="2" height="2" fill="#5aa028"/><rect x="1094.7" y="527.9" width="2" height="2" fill="#5aa028"/><rect x="1083.9" y="540.0" width="2" height="2" fill="#5aa028"/><rect x="1089.3" y="539.1" width="2" height="2" fill="#5aa028"/><rect x="1091.6" y="538.2" width="2" height="2" fill="#5aa028"/><rect x="1092.3" y="541.8" width="5" height="2" fill="#5aa028"/><rect x="1092.9" y="545.9" width="2" height="2" fill="#5aa028"/><rect x="1094.7" y="545.9" width="2" height="2" fill="#5aa028"/><rect x="1077.6" y="551.1" width="2" height="5" fill="#5aa028"/><rect x="1078.5" y="558.0" width="2" height="2" fill="#5aa028"/><rect x="1082.1" y="558.9" width="2" height="2" fill="#5aa028"/><rect x="1087.1" y="550.8" width="2" height="2" fill="#5aa028"/><rect x="1091.1" y="551.7" width="2" height="2" fill="#5aa028"/><rect x="1085.1" y="558.9" width="5" height="2" fill="#5aa028"/><rect x="1091.1" y="558.9" width="2" height="2" fill="#5aa028"/><rect x="1093.8" y="558.0" width="2" height="2" fill="#5aa028"/><rect x="1143.0" y="471.7" width="2" height="2" fill="#5aa028"/><rect x="1111.1" y="482.0" width="2" height="2" fill="#5aa028"/><rect x="1125.0" y="482.0" width="2" height="2" fill="#5aa028"/><rect x="1138.1" y="482.0" width="2" height="2" fill="#5aa028"/><rect x="1153.8" y="482.0" width="2" height="2" fill="#5aa028"/><rect x="1170.9" y="482.0" width="2" height="2" fill="#5aa028"/><rect x="1187.1" y="486.1" width="2" height="2" fill="#5aa028"/><rect x="1132.7" y="523.0" width="2" height="2" fill="#5aa028"/><rect x="1135.8" y="524.8" width="2" height="2" fill="#5aa028"/><rect x="1094.9" y="527.9" width="2" height="2" fill="#5aa028"/><rect x="1098.0" y="527.9" width="2" height="2" fill="#5aa028"/><rect x="1107.3" y="527.0" width="5" height="2" fill="#5aa028"/><rect x="1116.9" y="527.0" width="2" height="2" fill="#5aa028"/><rect x="1120.1" y="527.0" width="2" height="2" fill="#5aa028"/><rect x="1124.4" y="527.0" width="5" height="2" fill="#5aa028"/><rect x="1105.7" y="531.1" width="2" height="2" fill="#5aa028"/><rect x="1114.7" y="532.8" width="2" height="2" fill="#5aa028"/><rect x="1132.7" y="530.2" width="2" height="2" fill="#5aa028"/><rect x="1121.0" y="535.1" width="2" height="2" fill="#5aa028"/><rect x="1106.1" y="536.9" width="2" height="2" fill="#5aa028"/><rect x="1107.9" y="537.8" width="2" height="2" fill="#5aa028"/><rect x="1111.1" y="537.8" width="2" height="2" fill="#5aa028"/><rect x="1130.9" y="536.4" width="2" height="2" fill="#5aa028"/><rect x="1129.1" y="537.8" width="2" height="2" fill="#5aa028"/><rect x="1125.0" y="540.0" width="2" height="2" fill="#5aa028"/><rect x="1121.9" y="540.9" width="2" height="2" fill="#5aa028"/><rect x="1135.8" y="540.0" width="2" height="2" fill="#5aa028"/><rect x="1134.0" y="540.8" width="2" height="5" fill="#5aa028"/><rect x="1094.9" y="541.8" width="2" height="2" fill="#5aa028"/><rect x="1100.7" y="541.8" width="2" height="2" fill="#5aa028"/><rect x="1104.8" y="539.4" width="2" height="5" fill="#5aa028"/><rect x="1112.0" y="541.8" width="2" height="2" fill="#5aa028"/><rect x="1095.8" y="545.9" width="2" height="2" fill="#5aa028"/><rect x="1103.3" y="545.9" width="5" height="2" fill="#5aa028"/><rect x="1108.8" y="545.9" width="2" height="2" fill="#5aa028"/><rect x="1114.7" y="545.9" width="2" height="2" fill="#5aa028"/><rect x="1128.5" y="545.9" width="5" height="2" fill="#5aa028"/><rect x="1141.2" y="546.8" width="2" height="2" fill="#5aa028"/><rect x="1143.9" y="548.1" width="2" height="2" fill="#5aa028"/><rect x="1140.8" y="549.9" width="2" height="2" fill="#5aa028"/><rect x="1143.5" y="549.9" width="2" height="2" fill="#5aa028"/><rect x="1096.7" y="551.7" width="2" height="2" fill="#5aa028"/><rect x="1114.7" y="551.6" width="2" height="5" fill="#5aa028"/><rect x="1121.0" y="550.8" width="2" height="2" fill="#5aa028"/><rect x="1123.7" y="551.7" width="2" height="2" fill="#5aa028"/><rect x="1114.7" y="556.7" width="2" height="2" fill="#5aa028"/><rect x="1120.1" y="558.9" width="2" height="2" fill="#5aa028"/><rect x="1122.8" y="558.0" width="2" height="2" fill="#5aa028"/><rect x="1094.9" y="558.0" width="2" height="2" fill="#5aa028"/><rect x="1097.6" y="558.0" width="2" height="2" fill="#5aa028"/><rect x="1151.0" y="553.4" width="5" height="4" fill="#5aa028"/><rect x="1156.1" y="531.1" width="2" height="2" fill="#5aa028"/><rect x="1159.1" y="531.1" width="2" height="2" fill="#5aa028"/><rect x="1162.2" y="531.1" width="2" height="2" fill="#5aa028"/><rect x="1165.2" y="531.1" width="2" height="2" fill="#5aa028"/><rect x="1168.3" y="531.1" width="2" height="2" fill="#5aa028"/><rect x="1178.1" y="531.9" width="2" height="2" fill="#5aa028"/><rect x="1183.0" y="530.2" width="2" height="2" fill="#5aa028"/><rect x="1191.1" y="531.9" width="2" height="2" fill="#5aa028"/><rect x="1193.8" y="533.7" width="2" height="2" fill="#5aa028"/><rect x="1198.8" y="533.6" width="2" height="5" fill="#5aa028"/><rect x="1178.1" y="536.0" width="2" height="2" fill="#5aa028"/><rect x="1180.8" y="536.0" width="2" height="2" fill="#5aa028"/><rect x="1182.4" y="536.0" width="5" height="2" fill="#5aa028"/><rect x="1193.8" y="536.9" width="2" height="2" fill="#5aa028"/><rect x="1190.7" y="538.7" width="2" height="2" fill="#5aa028"/><rect x="1175.8" y="540.9" width="2" height="2" fill="#5aa028"/><rect x="1180.8" y="540.9" width="2" height="2" fill="#5aa028"/><rect x="1156.1" y="541.8" width="2" height="2" fill="#5aa028"/><rect x="1159.2" y="541.8" width="2" height="2" fill="#5aa028"/><rect x="1161.9" y="541.8" width="2" height="2" fill="#5aa028"/><rect x="1156.1" y="545.0" width="2" height="2" fill="#5aa028"/><rect x="1159.2" y="545.0" width="2" height="2" fill="#5aa028"/><rect x="1161.9" y="545.0" width="2" height="2" fill="#5aa028"/><rect x="1167.7" y="543.5" width="2" height="5" fill="#5aa028"/><rect x="1170.3" y="545.9" width="5" height="2" fill="#5aa028"/><rect x="1175.7" y="545.9" width="5" height="2" fill="#5aa028"/><rect x="1180.4" y="545.0" width="9" height="2" fill="#5aa028"/><rect x="1191.1" y="545.4" width="2" height="2" fill="#5aa028"/><rect x="1197.4" y="544.1" width="2" height="2" fill="#5aa028"/><rect x="1195.6" y="545.9" width="2" height="2" fill="#5aa028"/><rect x="1197.9" y="547.2" width="2" height="2" fill="#5aa028"/><rect x="1163.7" y="549.0" width="2" height="2" fill="#5aa028"/><rect x="1166.8" y="549.0" width="2" height="2" fill="#5aa028"/><rect x="1170.0" y="549.0" width="2" height="2" fill="#5aa028"/><rect x="1173.1" y="549.0" width="2" height="2" fill="#5aa028"/><rect x="1175.7" y="549.0" width="5" height="2" fill="#5aa028"/><rect x="1190.5" y="549.9" width="5" height="2" fill="#5aa028"/><rect x="1197.3" y="549.9" width="5" height="2" fill="#5aa028"/><rect x="1178.5" y="556.1" width="2" height="5" fill="#5aa028"/><rect x="1178.8" y="559.8" width="5" height="2" fill="#5aa028"/><rect x="1212.6" y="553.9" width="4" height="4" fill="#5aa028"/><rect x="1314.8" y="482.9" width="2" height="2" fill="#5aa028"/><rect x="1322.0" y="485.6" width="2" height="2" fill="#5aa028"/><rect x="1337.7" y="483.8" width="2" height="2" fill="#5aa028"/><rect x="1315.7" y="490.6" width="2" height="2" fill="#5aa028"/><rect x="1327.7" y="486.8" width="4" height="6" fill="#5aa028"/><rect x="1343.1" y="490.6" width="2" height="2" fill="#5aa028"/><rect x="1343.9" y="494.9" width="4" height="5" fill="#5aa028"/><rect x="1254.8" y="505.7" width="5" height="5" fill="#5aa028"/><rect x="1273.9" y="509.9" width="2" height="2" fill="#5aa028"/><rect x="1312.4" y="507.7" width="5" height="2" fill="#5aa028"/><rect x="1313.0" y="510.8" width="2" height="2" fill="#5aa028"/><rect x="1299.0" y="514.0" width="2" height="2" fill="#5aa028"/><rect x="1301.7" y="514.0" width="2" height="2" fill="#5aa028"/><rect x="1299.0" y="516.5" width="2" height="5" fill="#5aa028"/><rect x="1301.7" y="516.5" width="2" height="5" fill="#5aa028"/><rect x="1311.6" y="514.0" width="2" height="2" fill="#5aa028"/><rect x="1315.7" y="514.0" width="2" height="2" fill="#5aa028"/><rect x="1310.6" y="517.0" width="4" height="4" fill="#5aa028"/><rect x="1315.7" y="516.5" width="2" height="5" fill="#5aa028"/><rect x="1326.9" y="507.2" width="2" height="2" fill="#5aa028"/><rect x="1332.8" y="506.2" width="2" height="5" fill="#5aa028"/><rect x="1330.1" y="510.2" width="2" height="5" fill="#5aa028"/><rect x="1326.9" y="514.0" width="2" height="2" fill="#5aa028"/><rect x="1332.8" y="514.0" width="2" height="2" fill="#5aa028"/><rect x="1326.9" y="517.1" width="2" height="2" fill="#5aa028"/><rect x="1330.1" y="517.1" width="2" height="2" fill="#5aa028"/><rect x="1332.8" y="517.1" width="2" height="2" fill="#5aa028"/><rect x="1227.1" y="536.9" width="2" height="2" fill="#5aa028"/><rect x="1232.9" y="536.9" width="2" height="2" fill="#5aa028"/><rect x="1235.6" y="537.8" width="2" height="2" fill="#5aa028"/><rect x="1238.8" y="536.9" width="2" height="2" fill="#5aa028"/><rect x="1240.1" y="533.7" width="2" height="2" fill="#5aa028"/><rect x="1242.8" y="531.9" width="2" height="2" fill="#5aa028"/><rect x="1250.0" y="531.9" width="2" height="2" fill="#5aa028"/><rect x="1248.7" y="535.4" width="2" height="5" fill="#5aa028"/><rect x="1246.0" y="537.8" width="2" height="2" fill="#5aa028"/><rect x="1243.7" y="540.9" width="2" height="2" fill="#5aa028"/><rect x="1255.0" y="532.8" width="2" height="2" fill="#5aa028"/><rect x="1256.8" y="535.1" width="2" height="2" fill="#5aa028"/><rect x="1259.9" y="536.9" width="2" height="2" fill="#5aa028"/><rect x="1261.7" y="538.7" width="2" height="2" fill="#5aa028"/><rect x="1255.0" y="538.7" width="2" height="2" fill="#5aa028"/><rect x="1230.7" y="543.6" width="2" height="2" fill="#5aa028"/><rect x="1233.8" y="546.3" width="2" height="2" fill="#5aa028"/><rect x="1237.0" y="545.4" width="2" height="2" fill="#5aa028"/><rect x="1238.3" y="544.5" width="2" height="2" fill="#5aa028"/><rect x="1241.8" y="545.0" width="5" height="2" fill="#5aa028"/><rect x="1250.8" y="545.0" width="5" height="2" fill="#5aa028"/><rect x="1255.0" y="545.9" width="2" height="2" fill="#5aa028"/><rect x="1257.7" y="545.9" width="2" height="2" fill="#5aa028"/><rect x="1260.8" y="543.0" width="2" height="5" fill="#5aa028"/><rect x="1228.0" y="549.9" width="2" height="2" fill="#5aa028"/><rect x="1231.1" y="549.9" width="2" height="2" fill="#5aa028"/><rect x="1233.2" y="549.9" width="5" height="2" fill="#5aa028"/><rect x="1238.8" y="549.9" width="2" height="2" fill="#5aa028"/><rect x="1241.9" y="550.8" width="2" height="2" fill="#5aa028"/><rect x="1252.7" y="549.9" width="2" height="2" fill="#5aa028"/><rect x="1255.9" y="549.9" width="2" height="2" fill="#5aa028"/><rect x="1259.3" y="549.9" width="5" height="2" fill="#5aa028"/><rect x="1265.8" y="549.9" width="2" height="2" fill="#5aa028"/><rect x="1240.6" y="556.1" width="2" height="5" fill="#5aa028"/><rect x="1242.7" y="559.8" width="5" height="2" fill="#5aa028"/><rect x="1293.6" y="533.7" width="2" height="2" fill="#5aa028"/><rect x="1304.3" y="531.9" width="5" height="2" fill="#5aa028"/><rect x="1310.7" y="535.1" width="2" height="2" fill="#5aa028"/><rect x="1316.6" y="533.7" width="2" height="2" fill="#5aa028"/><rect x="1318.8" y="536.0" width="2" height="2" fill="#5aa028"/><rect x="1325.1" y="535.1" width="2" height="2" fill="#5aa028"/><rect x="1294.4" y="538.2" width="5" height="2" fill="#5aa028"/><rect x="1301.7" y="538.7" width="2" height="2" fill="#5aa028"/><rect x="1308.0" y="538.7" width="2" height="2" fill="#5aa028"/><rect x="1310.7" y="538.7" width="2" height="2" fill="#5aa028"/><rect x="1317.5" y="539.1" width="2" height="2" fill="#5aa028"/><rect x="1323.8" y="540.0" width="2" height="2" fill="#5aa028"/><rect x="1305.8" y="540.9" width="2" height="2" fill="#5aa028"/><rect x="1316.6" y="542.7" width="2" height="2" fill="#5aa028"/><rect x="1295.0" y="543.6" width="2" height="2" fill="#5aa028"/><rect x="1301.7" y="543.6" width="2" height="2" fill="#5aa028"/><rect x="1303.5" y="545.9" width="2" height="2" fill="#5aa028"/><rect x="1307.6" y="545.9" width="2" height="2" fill="#5aa028"/><rect x="1297.2" y="545.9" width="2" height="2" fill="#5aa028"/><rect x="1313.9" y="545.9" width="2" height="2" fill="#5aa028"/><rect x="1317.0" y="545.9" width="2" height="2" fill="#5aa028"/><rect x="1320.2" y="545.9" width="2" height="2" fill="#5aa028"/><rect x="1323.3" y="545.4" width="2" height="2" fill="#5aa028"/><rect x="1289.4" y="549.0" width="5" height="2" fill="#5aa028"/><rect x="1296.3" y="549.0" width="2" height="2" fill="#5aa028"/><rect x="1300.2" y="549.0" width="5" height="2" fill="#5aa028"/><rect x="1317.0" y="549.9" width="2" height="2" fill="#5aa028"/><rect x="1319.1" y="549.9" width="5" height="2" fill="#5aa028"/><rect x="1325.4" y="549.9" width="5" height="2" fill="#5aa028"/><rect x="1305.3" y="555.2" width="2" height="5" fill="#5aa028"/><rect x="1306.1" y="560.7" width="5" height="2" fill="#5aa028"/><rect x="1397.9" y="471.2" width="4" height="3" fill="#5aa028"/><rect x="1450.9" y="477.9" width="4" height="4" fill="#5aa028"/><rect x="1424.7" y="483.7" width="6" height="4" fill="#5aa028"/><rect x="1436.9" y="483.7" width="6" height="4" fill="#5aa028"/><rect x="1425.2" y="490.6" width="5" height="2" fill="#5aa028"/><rect x="1424.7" y="493.5" width="6" height="6" fill="#5aa028"/><rect x="1441.0" y="489.9" width="5" height="7" fill="#5aa028"/><rect x="1344.8" y="495.0" width="4" height="4" fill="#5aa028"/><rect x="1362.7" y="497.7" width="5" height="4" fill="#5aa028"/><rect x="1401.9" y="498.6" width="4" height="4" fill="#5aa028"/><rect x="1409.9" y="502.6" width="5" height="4" fill="#5aa028"/><rect x="1357.9" y="502.7" width="2" height="2" fill="#5aa028"/><rect x="1381.8" y="502.7" width="2" height="2" fill="#5aa028"/><rect x="1357.9" y="507.7" width="2" height="2" fill="#5aa028"/><rect x="1357.9" y="510.8" width="2" height="2" fill="#5aa028"/><rect x="1357.9" y="514.3" width="2" height="5" fill="#5aa028"/><rect x="1352.1" y="519.8" width="2" height="2" fill="#5aa028"/><rect x="1368.7" y="509.9" width="2" height="2" fill="#5aa028"/><rect x="1368.7" y="513.1" width="2" height="2" fill="#5aa028"/><rect x="1376.8" y="508.4" width="2" height="5" fill="#5aa028"/><rect x="1375.0" y="513.1" width="2" height="2" fill="#5aa028"/><rect x="1376.8" y="514.9" width="2" height="2" fill="#5aa028"/><rect x="1381.8" y="514.0" width="2" height="2" fill="#5aa028"/><rect x="1384.9" y="514.9" width="2" height="2" fill="#5aa028"/><rect x="1387.7" y="515.8" width="9" height="2" fill="#5aa028"/><rect x="1387.2" y="508.6" width="2" height="2" fill="#5aa028"/><rect x="1376.8" y="518.0" width="2" height="2" fill="#5aa028"/><rect x="1373.7" y="519.8" width="2" height="2" fill="#5aa028"/><rect x="1380.0" y="519.8" width="2" height="2" fill="#5aa028"/><rect x="1368.7" y="522.1" width="2" height="2" fill="#5aa028"/><rect x="1381.8" y="523.9" width="2" height="2" fill="#5aa028"/><rect x="1410.1" y="508.6" width="2" height="2" fill="#5aa028"/><rect x="1409.9" y="517.1" width="5" height="3" fill="#5aa028"/><rect x="1415.9" y="520.7" width="2" height="2" fill="#5aa028"/><rect x="1421.8" y="520.7" width="2" height="2" fill="#5aa028"/><rect x="1425.4" y="510.2" width="2" height="5" fill="#5aa028"/><rect x="1429.0" y="510.7" width="2" height="5" fill="#5aa028"/><rect x="1430.4" y="513.1" width="9" height="2" fill="#5aa028"/><rect x="1441.1" y="512.2" width="2" height="2" fill="#5aa028"/><rect x="1442.3" y="513.8" width="5" height="6" fill="#5aa028"/><rect x="1449.7" y="513.4" width="2" height="5" fill="#5aa028"/><rect x="1452.4" y="498.5" width="2" height="5" fill="#5aa028"/><rect x="1455.1" y="499.0" width="2" height="14" fill="#5aa028"/><rect x="1458.7" y="502.5" width="2" height="7" fill="#5aa028"/><rect x="1458.7" y="512.8" width="2" height="7" fill="#5aa028"/><rect x="1443.8" y="524.8" width="2" height="2" fill="#5aa028"/><rect x="1446.5" y="524.8" width="2" height="2" fill="#5aa028"/><rect x="1451.8" y="526.6" width="5" height="2" fill="#5aa028"/><rect x="1456.0" y="524.8" width="2" height="2" fill="#5aa028"/><rect x="1424.7" y="528.8" width="16" height="2" fill="#5aa028"/><rect x="1366.3" y="531.9" width="5" height="2" fill="#5aa028"/><rect x="1371.9" y="531.9" width="2" height="2" fill="#5aa028"/><rect x="1380.9" y="533.7" width="2" height="2" fill="#5aa028"/><rect x="1382.7" y="534.9" width="2" height="5" fill="#5aa028"/><rect x="1359.7" y="537.8" width="2" height="2" fill="#5aa028"/><rect x="1357.9" y="539.6" width="2" height="2" fill="#5aa028"/><rect x="1365.6" y="538.7" width="2" height="2" fill="#5aa028"/><rect x="1375.0" y="537.8" width="2" height="2" fill="#5aa028"/><rect x="1370.1" y="541.4" width="2" height="2" fill="#5aa028"/><rect x="1372.2" y="540.9" width="5" height="2" fill="#5aa028"/><rect x="1380.9" y="540.9" width="2" height="2" fill="#5aa028"/><rect x="1390.8" y="541.8" width="2" height="2" fill="#5aa028"/><rect x="1357.9" y="543.6" width="2" height="2" fill="#5aa028"/><rect x="1358.8" y="545.9" width="2" height="2" fill="#5aa028"/><rect x="1362.9" y="545.9" width="2" height="2" fill="#5aa028"/><rect x="1365.6" y="543.6" width="2" height="2" fill="#5aa028"/><rect x="1367.7" y="545.9" width="5" height="2" fill="#5aa028"/><rect x="1375.8" y="545.9" width="5" height="2" fill="#5aa028"/><rect x="1380.9" y="545.9" width="2" height="2" fill="#5aa028"/><rect x="1383.9" y="545.4" width="5" height="2" fill="#5aa028"/><rect x="1402.4" y="535.9" width="4" height="4" fill="#5aa028"/><rect x="1411.7" y="535.9" width="6" height="4" fill="#5aa028"/><rect x="1422.6" y="535.9" width="4" height="4" fill="#5aa028"/><rect x="1428.5" y="535.1" width="2" height="2" fill="#5aa028"/><rect x="1433.0" y="532.8" width="2" height="2" fill="#5aa028"/><rect x="1434.8" y="537.8" width="2" height="2" fill="#5aa028"/><rect x="1443.8" y="532.8" width="2" height="2" fill="#5aa028"/><rect x="1445.6" y="535.1" width="2" height="2" fill="#5aa028"/><rect x="1445.6" y="537.8" width="2" height="2" fill="#5aa028"/><rect x="1451.9" y="533.7" width="2" height="2" fill="#5aa028"/><rect x="1458.7" y="533.6" width="2" height="5" fill="#5aa028"/><rect x="1428.5" y="538.5" width="2" height="5" fill="#5aa028"/><rect x="1433.0" y="540.9" width="2" height="2" fill="#5aa028"/><rect x="1435.6" y="540.9" width="5" height="2" fill="#5aa028"/><rect x="1443.8" y="540.2" width="2" height="7" fill="#5aa028"/><rect x="1422.2" y="542.1" width="2" height="5" fill="#5aa028"/><rect x="1425.2" y="545.9" width="5" height="2" fill="#5aa028"/><rect x="1433.1" y="545.9" width="9" height="2" fill="#5aa028"/><rect x="1441.1" y="545.4" width="2" height="2" fill="#5aa028"/><rect x="1447.9" y="546.8" width="2" height="2" fill="#5aa028"/><rect x="1451.0" y="545.9" width="2" height="2" fill="#5aa028"/><rect x="1451.9" y="542.7" width="2" height="2" fill="#5aa028"/><rect x="1355.7" y="549.9" width="2" height="2" fill="#5aa028"/><rect x="1358.4" y="549.9" width="2" height="2" fill="#5aa028"/><rect x="1361.5" y="549.9" width="2" height="2" fill="#5aa028"/><rect x="1364.2" y="549.9" width="2" height="2" fill="#5aa028"/><rect x="1366.9" y="549.9" width="2" height="2" fill="#5aa028"/><rect x="1379.4" y="549.9" width="5" height="2" fill="#5aa028"/><rect x="1387.9" y="549.9" width="5" height="2" fill="#5aa028"/><rect x="1402.8" y="547.5" width="5" height="5" fill="#5aa028"/><rect x="1416.2" y="549.9" width="5" height="2" fill="#5aa028"/><rect x="1422.2" y="549.9" width="2" height="2" fill="#5aa028"/><rect x="1424.3" y="549.9" width="5" height="2" fill="#5aa028"/><rect x="1429.9" y="549.9" width="2" height="2" fill="#5aa028"/><rect x="1444.7" y="549.9" width="2" height="2" fill="#5aa028"/><rect x="1447.4" y="549.9" width="2" height="2" fill="#5aa028"/><rect x="1449.5" y="549.9" width="5" height="2" fill="#5aa028"/><rect x="1455.1" y="549.9" width="2" height="2" fill="#5aa028"/><rect x="1368.2" y="556.1" width="4" height="4" fill="#5aa028"/><rect x="1373.7" y="559.8" width="2" height="2" fill="#5aa028"/><rect x="1432.1" y="556.5" width="2" height="5" fill="#5aa028"/><rect x="1434.2" y="560.7" width="5" height="2" fill="#5aa028"/><g stroke="#fff" stroke-width="1" fill="none"><circle cx="968" cy="564" r="7"/><path d="M959 555 L977 573 M977 555 L959 573 M968 553 V575 M957 564 H979"/></g></svg></body></html>
